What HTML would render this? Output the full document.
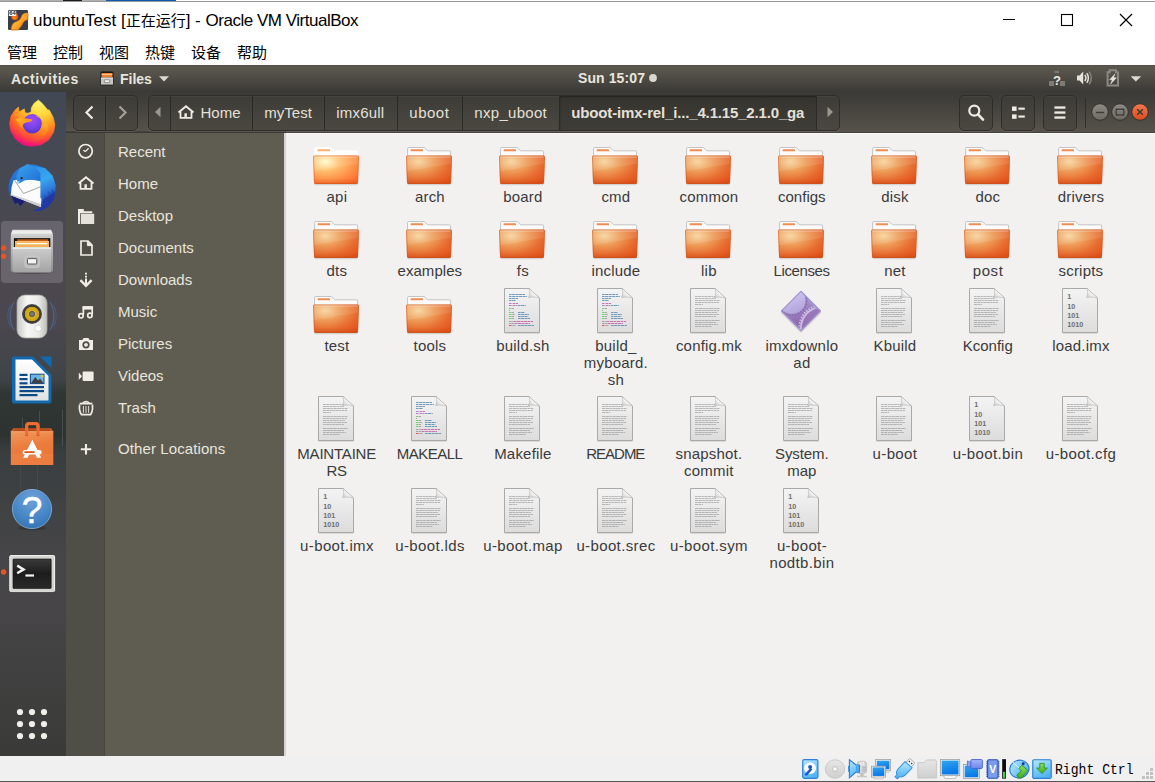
<!DOCTYPE html>
<html lang="zh"><head><meta charset="utf-8"><title>ubuntuTest - Oracle VM VirtualBox</title>
<style>
html,body{margin:0;padding:0}
body{width:1155px;height:782px;position:relative;overflow:hidden;background:#fff;font-family:"Liberation Sans","Noto Sans CJK SC",sans-serif;}
.abs{position:absolute}
svg{position:absolute;overflow:visible}
/* top strip */
#strip0{left:0;top:0;width:1155px;height:1px;background:linear-gradient(90deg,#aeb2b5 0,#aeb2b5 63px,#1c1c1c 63px,#1c1c1c 82px,#aeb2b5 82px,#aeb2b5 106px,#fff 106px)}
#strip0b{left:106px;top:0;width:70px;height:1px;background:#0b5cad}
#strip1{left:0;top:1px;width:1155px;height:1px;background:#979797}
/* VirtualBox title */
#vbtitle{left:0;top:2px;width:1155px;height:38px;background:#fff}
#vbtitle .t{left:33px;top:9px;font-size:17px;line-height:20px;color:#000;white-space:nowrap}
#vbtitle .cj{font-size:15px}
#vbmenu{left:0;top:40px;width:1155px;height:25px;background:#fff}
#vbmenu span{position:absolute;top:3px;font-size:15px;line-height:20px;color:#000;white-space:nowrap}
/* ubuntu panel */
#panel{left:0;top:65px;width:1155px;height:27px;background:linear-gradient(#4c4a43 0px,#5a574f 1px,#55524a 8px,#4c4a43 14px,#44423d 20px,#3c3b37 26px,#3b3a36 27px)}
#panel .b{position:absolute;font-weight:bold;font-size:14px;line-height:18px;color:#e9e6df;white-space:nowrap;top:5px}
/* header bar */
#hb{left:66px;top:92px;width:1089px;height:40px;background:linear-gradient(#3b3a36 0%,#44423d 35%,#4e4b45 70%,#57534b 100%);}
#hbline{left:66px;top:132px;width:1089px;height:1px;background:#45433d}
#cline{left:286px;top:133px;width:869px;height:1px;background:#fbfaf9;z-index:2}
.btn{position:absolute;box-sizing:border-box;border:1px solid #2e2d29;border-radius:5px;background:linear-gradient(#3d3c37,#4a4841);box-shadow:0 1px 0 rgba(255,255,255,.10), inset 0 1px 0 rgba(255,255,255,.04)}
.ptxt{position:absolute;top:103px;font-size:15px;line-height:20px;color:#e4e0d8;white-space:nowrap}
/* dock */
#dock{left:0;top:92px;width:66px;height:664px;background:linear-gradient(#414955 0px,#454953 60px,#4a4850 140px,#4c474e 225px,#44464b 262px,#3e4245 293px,#3c4042 353px,#3e4142 400px,#464547 465px,#474547 520px,#434243 560px,#3e3e3d 610px,#3a3a38 664px)}
/* sidebar */
#sbi{left:66px;top:133px;width:39px;height:623px;background:#4f4e47;box-shadow:inset -1px 0 0 #48473f}
#sbm{left:105px;top:133px;width:179px;height:623px;background:#5f5d51}
#sbsep{left:284px;top:133px;width:2px;height:623px;background:#d6d4d0}
.sl{position:absolute;left:118px;font-size:15px;line-height:20px;color:#e8e5de;white-space:nowrap}
/* content */
#content{left:286px;top:133px;width:869px;height:623px;background:#f2f1f0}
.lbl{position:absolute;width:120px;text-align:center;font-size:15px;line-height:17px;color:#3a3a3a;white-space:nowrap}
/* status */
#vbstatus{left:0;top:756px;width:1155px;height:25px;background:#f0f0f0}
#vbbot{left:0;top:781px;width:1155px;height:1px;background:#555}
#rctrl{left:1055px;top:763px;transform:scaleY(1.12);transform-origin:0 80%;font-family:"Liberation Mono",monospace;font-size:13.1px;line-height:16px;color:#000;white-space:nowrap}

</style></head>
<body>
<div class="abs" id="strip0"></div><div class="abs" id="strip0b"></div><div class="abs" id="strip1"></div>
<div class="abs" id="vbtitle">
<svg style="left:8px;top:8px" width="20" height="20" viewBox="0 0 20 20">
<defs><linearGradient id="vbg" x1="0" y1="0" x2="1" y2="1"><stop offset="0" stop-color="#ffd968"/><stop offset="0.55" stop-color="#fba428"/><stop offset="1" stop-color="#e87a12"/></linearGradient>
<radialGradient id="vbb" cx="0.45" cy="0.7" r="0.7"><stop offset="0" stop-color="#ff8a1c"/><stop offset="1" stop-color="#d8400c"/></radialGradient></defs>
<rect x="0" y="0" width="20" height="20" rx="1.2" fill="#393d49"/>
<path d="M3 20 C3.4 15 5 12.4 8.6 11.4 C12 10.4 12.8 8 13.8 5.6 C14.8 3.4 17.4 2.8 20 2.8 L20 9.8 C17 10.2 15.6 11.6 14.6 14 C13.6 16.8 11 18 10.6 20 Z" fill="url(#vbg)" stroke="#b8560c" stroke-width="0.6"/>
<circle cx="6.8" cy="6.4" r="3.5" fill="url(#vbb)"/>
<rect x="0.8" y="0.8" width="7.4" height="5.2" fill="#f4f4f6"/>
<text x="1.3" y="5.2" font-size="5" font-weight="bold" font-family="Liberation Sans, sans-serif" fill="#2a2a30" textLength="6.4" lengthAdjust="spacingAndGlyphs">64</text>
</svg>
<div class="abs t">ubuntuTest [<span class="cj">正在运行</span>] - <span style="letter-spacing:-0.48px">Oracle VM VirtualBox</span></div>
<svg style="left:1000px;top:0" width="150" height="38" viewBox="0 0 150 38">
<path d="M3 17.5 H15" stroke="#000" stroke-width="1"/>
<rect x="61.5" y="12.5" width="11" height="11" fill="none" stroke="#000" stroke-width="1.1"/>
<path d="M120 12 L132 24 M132 12 L120 24" stroke="#000" stroke-width="1.15"/>
</svg>
</div>
<div class="abs" id="vbmenu"><span style="left:7px">管理</span><span style="left:53px">控制</span><span style="left:99px">视图</span><span style="left:145px">热键</span><span style="left:191px">设备</span><span style="left:237px">帮助</span></div>
<div class="abs" id="panel">
<span class="b" style="left:11px;letter-spacing:0.55px">Activities</span>
<svg style="left:100px;top:6px" width="14" height="15" viewBox="0 0 14 15">
<rect x="0.3" y="0.3" width="13.4" height="14.4" rx="1.6" fill="#2a2926"/>
<rect x="1" y="0.9" width="12" height="5.6" rx="0.8" fill="#1c1b19"/>
<rect x="1.6" y="2" width="10.8" height="4.2" fill="#ee7e2e"/>
<rect x="1.6" y="2.9" width="10.8" height="1" fill="#ffc98e"/>
<rect x="1" y="6.6" width="12" height="7" fill="#c4c4c0"/>
<rect x="1" y="6.6" width="12" height="1" fill="#e8e8e6"/>
<rect x="4.4" y="8.8" width="5.2" height="2.8" rx="0.6" fill="#f6f6f4" stroke="#7c7b75" stroke-width="0.8"/>
</svg>
<span class="b" style="left:120px">Files</span>
<svg style="left:159px;top:11px" width="10" height="6" viewBox="0 0 10 6"><path d="M0 0.3 H10 L5 5.6 Z" fill="#dcd9d1"/></svg>
<span class="b" id="clock" style="left:578px;top:4px;letter-spacing:0.1px">Sun 15:07</span>
<svg style="left:649px;top:9px" width="8" height="8" viewBox="0 0 8 8"><circle cx="4" cy="4" r="3.9" fill="#d8d6d0"/></svg>
<svg style="left:1049px;top:5px" width="17" height="17" viewBox="0 0 17 17">
<rect x="0" y="11" width="5" height="5" fill="#7d7b75"/>
<rect x="11" y="11" width="5" height="5" fill="#7d7b75"/>
<rect x="5.5" y="0.8" width="4.5" height="2.2" fill="#7d7b75"/>
<text x="8" y="14.6" text-anchor="middle" font-family="Liberation Sans, sans-serif" font-weight="bold" font-size="13" fill="#eeebe4">?</text>
</svg>
<svg style="left:1076px;top:5px" width="17" height="17" viewBox="0 0 17 17">
<path d="M1 5.5 H3.6 L7.2 1.6 V14.4 L3.6 10.5 H1 Z" fill="#e6e3dc"/>
<path d="M8.8 5 C10 6.6 10 9.4 8.8 11" stroke="#e6e3dc" stroke-width="1.5" fill="none"/>
<path d="M10.8 3.2 C12.9 5.8 12.9 10.2 10.8 12.8" stroke="#e6e3dc" stroke-width="1.5" fill="none"/>
<path d="M13 1.6 C16 5.2 16 10.8 13 14.4" stroke="#8a8780" stroke-width="1.4" fill="none"/>
</svg>
<svg style="left:1106px;top:4px" width="14" height="18" viewBox="0 0 14 18">
<path d="M1.6 3.2 H3.6 V1.2 H10 V3.2 H12 V16.6 H1.6 Z" fill="none" stroke="#8b8982" stroke-width="2"/>
<path d="M9 5 L3.6 10.8 H6.4 L4.6 15 L10.4 8.8 H7.4 Z" fill="#ebe8e1" stroke="#ebe8e1" stroke-width="0.5"/>
</svg>
<svg style="left:1130px;top:11px" width="12" height="6" viewBox="0 0 12 6"><path d="M0.6 0.2 H11.2 L5.9 5.4 Z" fill="#dcd9d1"/></svg>
</div>
<div class="abs" id="dock"></div>
<div class="abs" style="left:0;top:380px;width:66px;height:75px;background:linear-gradient(rgba(36,44,38,0) 0,rgba(36,44,38,.55) 14px,rgba(34,42,36,.6) 55px,rgba(36,44,38,0) 75px)"></div>
<div class="abs" style="left:0;top:445px;width:66px;height:60px;background:linear-gradient(rgba(52,58,58,.35),rgba(52,58,58,0))"></div>
<div class="abs" style="left:22px;top:418px;width:1px;height:28px;background:rgba(200,205,205,.16)"></div><div class="abs" style="left:39px;top:411px;width:1px;height:35px;background:rgba(200,205,205,.16)"></div><div class="abs" style="left:62px;top:410px;width:1px;height:36px;background:rgba(200,205,205,.16)"></div><div class="abs" style="left:20px;top:466px;width:1px;height:40px;background:rgba(200,205,205,.07)"></div><div class="abs" style="left:37px;top:466px;width:1px;height:40px;background:rgba(200,205,205,.07)"></div>
<div class="abs" style="left:1px;top:221px;width:62px;height:62px;border-radius:4px;background:rgba(255,246,255,.17)"></div>
<svg style="left:0;top:240px" width="8" height="24" viewBox="0 0 8 24"><circle cx="3.6" cy="8" r="2.7" fill="#e95420"/><circle cx="3.6" cy="16.2" r="2.7" fill="#e95420"/></svg>
<svg style="left:0;top:566px" width="8" height="12" viewBox="0 0 8 12"><circle cx="3.6" cy="6" r="2.7" fill="#e95420"/></svg>
<svg style="left:9px;top:99px" width="46" height="48" viewBox="0 0 46 48">
<defs>
<radialGradient id="ff1" gradientUnits="userSpaceOnUse" cx="31" cy="3" r="49"><stop offset="0" stop-color="#fff56e"/><stop offset="0.26" stop-color="#ffd83c"/><stop offset="0.48" stop-color="#ffa022"/><stop offset="0.68" stop-color="#ff6426"/><stop offset="0.8" stop-color="#fc3a44"/><stop offset="0.9" stop-color="#f2127a"/><stop offset="1" stop-color="#e3108a"/></radialGradient>
<radialGradient id="ff2" cx="0.5" cy="0.3" r="0.8"><stop offset="0" stop-color="#a04cff"/><stop offset="0.55" stop-color="#7542e5"/><stop offset="1" stop-color="#4a2cc0"/></radialGradient>
<linearGradient id="ff3" x1="0" y1="0" x2="1" y2="0.6"><stop offset="0" stop-color="#ffb52a"/><stop offset="1" stop-color="#ff8a1c"/></linearGradient>
<linearGradient id="ff4" x1="0.8" y1="0" x2="0.3" y2="1"><stop offset="0" stop-color="#ffd43c" stop-opacity="0.9"/><stop offset="0.5" stop-color="#ff8a1f" stop-opacity="0.7"/><stop offset="1" stop-color="#ff3a4a" stop-opacity="0.5"/></linearGradient>
</defs>
<path d="M29.45 1.14 L32.91 4.21 L35.98 7.66 L39.05 11.50 L39.97 10.73 L42.12 14.57 L44.27 18.79 L45.80 25.70 L44.57 33.37 L39.82 40.66 L32.14 45.65 L22.93 47.34 L14.11 45.65 L6.66 40.28 L1.83 31.84 L0.67 24.16 L2.21 16.87 L6.05 11.12 L9.50 8.20 L10.04 13.04 L15.26 9.97 L16.02 14.03 L19.48 14.19 L22.16 13.11 L22.47 8.81 L25.23 4.21 Z" fill="url(#ff1)" stroke="url(#ff1)" stroke-width="0.8" stroke-linejoin="round"/>
<circle cx="23.31" cy="24.78" r="9.7" fill="url(#ff2)"/>
<path d="M13.11 29.54 C13.94 29.92 14.39 32.45 16.02 33.37 C17.66 34.29 20.76 35.13 22.93 35.06 C25.11 35.00 27.51 34.29 29.07 32.99 C30.63 31.68 31.85 29.22 32.29 27.23 C32.74 25.25 32.29 22.76 31.76 21.09 C31.22 19.43 29.90 17.96 29.07 17.26 C28.24 16.55 26.38 16.36 26.77 16.87 C27.15 17.38 30.35 18.86 31.37 20.33 C32.40 21.80 32.14 25.06 32.91 25.70 C33.68 26.34 34.95 23.91 35.98 24.16 C37.00 24.42 38.73 25.70 39.05 27.23 C39.37 28.77 38.92 31.33 37.90 33.37 C36.87 35.42 35.02 38.04 32.91 39.51 C30.80 40.98 27.79 41.94 25.23 42.20 C22.68 42.45 19.73 42.01 17.56 41.05 C15.38 40.09 13.27 38.11 12.19 36.44 C11.10 34.78 10.88 32.22 11.04 31.07 C11.19 29.92 12.28 29.15 13.11 29.54 Z" fill="url(#ff4)"/>
<path d="M6.81 20.71 C7.26 20.03 9.63 19.16 11.42 18.94 C13.21 18.73 15.61 19.15 17.56 19.41 C19.50 19.66 22.47 19.92 23.08 20.48 C23.70 21.04 22.42 22.19 21.24 22.78 C20.07 23.37 17.30 23.40 16.02 24.01 C14.74 24.62 14.05 25.54 13.57 26.47 C13.08 27.39 13.53 29.54 13.11 29.54 C12.69 29.54 11.76 27.55 11.04 26.47 C10.31 25.38 9.44 23.97 8.73 23.01 C8.03 22.05 6.37 21.39 6.81 20.71 Z" fill="url(#ff3)"/>
</svg>
<svg style="left:7px;top:163px" width="50" height="50" viewBox="0 0 50 50">
<defs>
<radialGradient id="tb1" cx="0.4" cy="0.2" r="0.95"><stop offset="0" stop-color="#2f8ce4"/><stop offset="0.55" stop-color="#2060c8"/><stop offset="1" stop-color="#1a3a9c"/></radialGradient>
<linearGradient id="tb2" x1="0" y1="0" x2="1" y2="1"><stop offset="0" stop-color="#3aa4ee"/><stop offset="1" stop-color="#1f6ed4"/></linearGradient>
<linearGradient id="tb3" x1="0" y1="0" x2="0.3" y2="1"><stop offset="0" stop-color="#2f94ea"/><stop offset="0.5" stop-color="#37a6f0"/><stop offset="1" stop-color="#2a62cc"/></linearGradient>
</defs>
<path d="M25.9 48.7 A23.6 23.6 0 1 0 2.7 32.8 L3.8 32.2 L33.8 44.1 Z" fill="url(#tb1)"/>
<path d="M4.2 32.6 L18.0 38.0 L13.4 43.3 L11.1 39.5 L8.0 41.0 Z" fill="#1a1f74"/>
<path d="M6.5 17.3 L18.0 15.7 L33.4 18.0 L35.3 25.7 L33.8 44.1 L3.8 32.2 L4.6 24.2 Z" fill="#fbfbfb"/>
<path d="M3.8 31.1 L33.8 41.0 L33.8 44.1 L3.8 32.2 Z" fill="#cfcfcf"/>
<path d="M7.7 17.4 L16.5 30.5 L34.3 23.5" fill="none" stroke="#8e8e8e" stroke-width="0.8"/>
<path d="M28.0 3.4 L38.0 5.0 L45.7 12.7 L48.7 22.6 L48.0 28.8 L44.9 25.7 L44.1 30.3 L41.0 28.0 L40.3 33.4 L37.2 31.1 L36.4 36.4 L33.4 34.9 L33.4 18.0 Z" fill="url(#tb3)"/>
<path d="M48.0 28.8 L47.2 36.4 L41.0 44.1 L33.4 48.0 L25.7 48.0 L34.9 44.1 L36.4 36.4 Z" fill="#2338a4"/>
<path d="M9.6 13.0 L12.7 5.7 L20.3 1.0 L28.0 3.4 L33.4 10.3 L33.4 18.0 L27.2 16.5 L18.0 17.3 L12.7 20.3 L10.3 20.3 Z" fill="url(#tb2)"/>
<circle cx="14.6" cy="15.1" r="1.2" fill="#3a2414"/>
<path d="M9.6 18.0 L13.0 18.4 L10.7 21.5 Z" fill="#a8dcea"/>
</svg>
<svg style="left:10px;top:229px" width="44" height="46" viewBox="0 0 44 46">
<defs><linearGradient id="fc0" x1="0" y1="0" x2="0" y2="1"><stop offset="0" stop-color="#d6d6d6"/><stop offset="0.5" stop-color="#f2f2f2"/><stop offset="1" stop-color="#dcdcdc"/></linearGradient>
<linearGradient id="fc1" x1="0" y1="0" x2="0" y2="1"><stop offset="0" stop-color="#cfcfcf"/><stop offset="1" stop-color="#8e8e8e"/></linearGradient>
<linearGradient id="fc2" x1="0" y1="0" x2="0" y2="1"><stop offset="0" stop-color="#cdcdcd"/><stop offset="1" stop-color="#a3a3a3"/></linearGradient></defs>
<ellipse cx="22" cy="43.6" rx="20" ry="1.6" fill="#000" opacity="0.18"/>
<rect x="0.8" y="5" width="42.2" height="37.4" rx="1" fill="url(#fc1)"/>
<path d="M2.4 0.7 H41.1 L43 5.3 H0.8 Z" fill="url(#fc0)"/>
<rect x="3.9" y="9.1" width="36.4" height="9.6" fill="#1a1917"/>
<rect x="7.2" y="10.3" width="31" height="3" fill="#c85a14"/>
<rect x="5" y="12.2" width="34" height="6.4" fill="#f4b258"/>
<rect x="5" y="12.2" width="34" height="1" fill="#f8c47a"/>
<rect x="6.8" y="14" width="30.4" height="1.3" fill="#fffaf0"/>
<rect x="2.7" y="18.3" width="38.4" height="25.3" rx="0.8" fill="url(#fc2)"/>
<rect x="2.7" y="18.3" width="38.4" height="1.5" fill="#f2f2f2"/>
<rect x="15" y="27.1" width="14.2" height="11.2" rx="2.2" fill="#bcbcbc" stroke="#d2d2d2" stroke-width="0.8"/>
<rect x="17.5" y="29.6" width="9.2" height="5.4" rx="0.7" fill="#f4f4f4" stroke="#4a4a4a" stroke-width="0.9"/>
</svg>
<svg style="left:4px;top:290px" width="56" height="52" viewBox="0 0 56 52">
<defs><linearGradient id="rb1" x1="0" y1="0" x2="1" y2="0"><stop offset="0" stop-color="#c9c9c6"/><stop offset="0.35" stop-color="#f6f6f4"/><stop offset="0.7" stop-color="#ecece9"/><stop offset="1" stop-color="#bdbdb9"/></linearGradient>
<radialGradient id="rb2" cx="0.5" cy="0.5" r="0.5"><stop offset="0" stop-color="#8a8a8a"/><stop offset="0.28" stop-color="#5a5a5a"/><stop offset="0.32" stop-color="#d9b51e"/><stop offset="0.7" stop-color="#c9a010"/><stop offset="0.76" stop-color="#333333"/><stop offset="1" stop-color="#505050"/></radialGradient></defs>
<path d="M10 12 C5 20 5 32 10 40" fill="none" stroke="#4f78b8" stroke-width="1.4" opacity="0.55"/>
<path d="M6.5 15 C3 22 3 30 6.5 37" fill="none" stroke="#4f78b8" stroke-width="1.2" opacity="0.35"/>
<path d="M46 12 C51 20 51 32 46 40" fill="none" stroke="#4f78b8" stroke-width="1.4" opacity="0.55"/>
<path d="M49.5 15 C53 22 53 30 49.5 37" fill="none" stroke="#4f78b8" stroke-width="1.2" opacity="0.35"/>
<rect x="13" y="5" width="30" height="43" rx="8" fill="url(#rb1)" stroke="#a5a5a2" stroke-width="0.8"/>
<circle cx="28" cy="24" r="10" fill="url(#rb2)"/>
<circle cx="34" cy="38.4" r="3.3" fill="#fbfbfb" stroke="#c4c4c2" stroke-width="0.6"/>
</svg>
<svg style="left:11px;top:355px" width="42" height="50" viewBox="0 0 42 50">
<defs><linearGradient id="lw1" x1="0" y1="0" x2="0" y2="1"><stop offset="0" stop-color="#ffffff"/><stop offset="1" stop-color="#e2e2e2"/></linearGradient></defs>
<path d="M3 1.5 H22 L40.5 20 V46.5 Q40.5 48.5 38.5 48.5 H3 Q1 48.5 1 46.5 V3.5 Q1 1.5 3 1.5 Z" fill="#1269ad"/>
<path d="M4.5 4.5 H21 L37.5 21 V45.5 H4.5 Z" fill="url(#lw1)"/>
<path d="M29 1.5 H40.5 V13 Z" fill="#1269ad"/>
<rect x="8.5" y="18.8" width="8" height="2.2" fill="#0c4a85"/><rect x="8.5" y="23.0" width="8" height="2.2" fill="#0c4a85"/><rect x="8.5" y="27.2" width="8" height="2.2" fill="#0c4a85"/><rect x="8.5" y="31.0" width="24.5" height="2.2" fill="#0c4a85"/><rect x="8.5" y="35.0" width="24.5" height="2.2" fill="#0c4a85"/><rect x="8.5" y="39.0" width="18.0" height="2.2" fill="#0c4a85"/>
<rect x="19.4" y="19.2" width="13.6" height="9.4" fill="#6ab4e6" stroke="#0c4a85" stroke-width="1"/>
<path d="M20 28.2 L24.2 22 L27 25.6 L29.2 23.8 L32.5 28.2 Z" fill="#3f3f3f"/>
<rect x="29.8" y="19.8" width="2.7" height="2.6" fill="#e8c030"/>
</svg>
<svg style="left:10px;top:421px" width="44" height="45" viewBox="0 0 44 45">
<defs><linearGradient id="us1" x1="0" y1="0" x2="0.25" y2="1"><stop offset="0" stop-color="#f09a60"/><stop offset="0.5" stop-color="#ec7d3e"/><stop offset="1" stop-color="#ea7434"/></linearGradient></defs>
<path d="M16.6 10 V5.4 Q16.6 2.6 19.4 2.6 H25.2 Q28 2.6 28 5.4 V10" fill="none" stroke="#d9601f" stroke-width="3.2"/>
<path d="M3.1 7.2 H41.1 L43.3 10.6 H0.8 Z" fill="#cf5a22"/>
<path d="M4.4 8.2 H39.8 L41.2 10.6 H3 Z" fill="#b84a16"/>
<rect x="0.8" y="10.3" width="42.5" height="33.7" fill="url(#us1)"/>
<rect x="0.8" y="33" width="42.5" height="11" fill="#fff" opacity="0.06"/>
<rect x="0.8" y="10.3" width="42.5" height="0.9" fill="#f6b080" opacity="0.8"/>
<path d="M16.6 5.4 Q16.6 2.6 19.4 2.6 H25.2 Q28 2.6 28 5.4 V14.4" fill="none" stroke="#ea6e30" stroke-width="3"/>
<path d="M16.6 5.4 V14.4" fill="none" stroke="#ea6e30" stroke-width="3"/>
<path d="M15.1 14.6 H18.1 M26.5 14.6 H29.5" stroke="#c9521a" stroke-width="0.8"/>
<path d="M22.3 19 L13.1 36.8 H17.6 L22.3 27 L27 36.8 H31.2 Z" fill="#fff"/>
<path d="M22.3 19 L17.4 29 H27.2 Z" fill="#fff"/>
<rect x="12.6" y="28.9" width="19" height="4.5" rx="2.25" fill="#fff"/>
<rect x="14.3" y="30.2" width="10.4" height="1.9" rx="0.9" fill="#e2500f"/>
</svg>
<svg style="left:11px;top:488px" width="42" height="44" viewBox="0 0 42 44">
<defs><radialGradient id="hp1" cx="0.5" cy="0.25" r="0.85"><stop offset="0" stop-color="#6ea2da"/><stop offset="0.6" stop-color="#4585c4"/><stop offset="1" stop-color="#2f6eac"/></radialGradient></defs>
<ellipse cx="21" cy="40" rx="14" ry="2.4" fill="#000" opacity="0.18"/>
<circle cx="21" cy="21" r="19.6" fill="url(#hp1)" stroke="#86b4e2" stroke-width="0.8"/>
<text x="21" y="34.8" text-anchor="middle" font-family="Liberation Sans, sans-serif" font-size="37" fill="#ffffff" stroke="#ffffff" stroke-width="0.5">?</text>
</svg>
<svg style="left:9px;top:555px" width="47" height="39" viewBox="0 0 47 39">
<defs><linearGradient id="tm1" x1="0" y1="0" x2="0" y2="1"><stop offset="0" stop-color="#3a3a3a"/><stop offset="0.5" stop-color="#1c1c1c"/><stop offset="1" stop-color="#2a2a2a"/></linearGradient></defs>
<rect x="0.8" y="0.6" width="44.8" height="36" rx="1" fill="#d4d4d2" stroke="#f6f6f4" stroke-width="1"/><rect x="0.3" y="36.6" width="45.8" height="1" fill="#000" opacity="0.18"/>
<rect x="4" y="4" width="38.2" height="29.4" rx="0.6" fill="url(#tm1)" stroke="#0a0a0a" stroke-width="0.6"/>
<path d="M8.2 10.6 L14.6 14.4 L8.2 18.2" fill="none" stroke="#f2f2f2" stroke-width="2.4"/>
<rect x="16.4" y="19.4" width="8.6" height="2.2" fill="#f2f2f2"/>
</svg>
<svg style="left:12px;top:704px" width="40" height="40" viewBox="0 0 40 40"><circle cx="8.0" cy="8.0" r="3.1" fill="#f1efea"/><circle cx="8.0" cy="20.0" r="3.1" fill="#f1efea"/><circle cx="8.0" cy="32.0" r="3.1" fill="#f1efea"/><circle cx="20.0" cy="8.0" r="3.1" fill="#f1efea"/><circle cx="20.0" cy="20.0" r="3.1" fill="#f1efea"/><circle cx="20.0" cy="32.0" r="3.1" fill="#f1efea"/><circle cx="32.0" cy="8.0" r="3.1" fill="#f1efea"/><circle cx="32.0" cy="20.0" r="3.1" fill="#f1efea"/><circle cx="32.0" cy="32.0" r="3.1" fill="#f1efea"/></svg>
<div class="abs" id="hb"></div><div class="abs" id="hbline"></div><div class="abs" id="cline"></div><div class="abs" style="left:66px;top:131px;width:220px;height:2px;background:linear-gradient(#4a4841,#34332f)"></div>
<div class="btn" style="left:73px;top:95px;width:65px;height:36px"></div>
<div class="abs" style="left:105px;top:96px;width:1px;height:34px;background:#2b2a27"></div>
<svg style="left:73px;top:95px" width="65" height="36" viewBox="0 0 65 36"><path d="M19.5 11.5 L13.5 17.5 L19.5 23.5" fill="none" stroke="#eeebe4" stroke-width="2.2"/><path d="M46.5 11.5 L52.5 17.5 L46.5 23.5" fill="none" stroke="#a39f97" stroke-width="2.2"/></svg>
<div class="btn" style="left:148px;top:95px;width:692px;height:36px"></div>
<div class="abs" style="left:560px;top:96px;width:257px;height:34px;background:linear-gradient(#35342f,#3e3d37);box-shadow:inset 0 1px 2px rgba(0,0,0,.35)"></div>
<div class="abs" style="left:170px;top:96px;width:1px;height:34px;background:#2b2a27"></div><div class="abs" style="left:252px;top:96px;width:1px;height:34px;background:#2b2a27"></div><div class="abs" style="left:324px;top:96px;width:1px;height:34px;background:#2b2a27"></div><div class="abs" style="left:397px;top:96px;width:1px;height:34px;background:#2b2a27"></div><div class="abs" style="left:462px;top:96px;width:1px;height:34px;background:#2b2a27"></div><div class="abs" style="left:559px;top:96px;width:1px;height:34px;background:#2b2a27"></div><div class="abs" style="left:816px;top:96px;width:1px;height:34px;background:#2b2a27"></div>
<svg style="left:154px;top:106px" width="8" height="12" viewBox="0 0 8 12"><path d="M6.5 0.8 V11.2 L1 6 Z" fill="#9b978f"/></svg>
<svg style="left:826px;top:106px" width="8" height="12" viewBox="0 0 8 12"><path d="M1.5 0.8 V11.2 L7 6 Z" fill="#9b978f"/></svg>
<svg style="left:178px;top:104px" width="16" height="16" viewBox="0 0 16 16"><path d="M0.5 8.6 L8 2.2 L15.5 8.6" fill="none" stroke="#eeebe4" stroke-width="2"/><path d="M2.5 7.6 V13.8 H13.5 V7.6" fill="none" stroke="#eeebe4" stroke-width="1.8"/><rect x="6.4" y="9.3" width="2.5" height="4.6" fill="#eeebe4"/></svg>
<span class="ptxt" style="left:200.5px;">Home</span><span class="ptxt" style="left:264.3px;">myTest</span><span class="ptxt" style="left:336.3px;letter-spacing:0.2px;">imx6ull</span><span class="ptxt" style="left:409.3px;letter-spacing:0.5px;">uboot</span><span class="ptxt" style="left:474.3px;letter-spacing:0.3px;">nxp_uboot</span><span class="ptxt" style="left:571.3px;font-weight:bold;letter-spacing:-0.16px;">uboot-imx-rel_i..._4.1.15_2.1.0_ga</span>
<div class="btn" style="left:959px;top:95px;width:34px;height:36px"></div><div class="btn" style="left:1001px;top:95px;width:34px;height:36px"></div><div class="btn" style="left:1043px;top:95px;width:34px;height:36px"></div>
<svg style="left:959px;top:95px" width="34" height="36" viewBox="0 0 34 36"><circle cx="15.3" cy="15.6" r="5" fill="none" stroke="#eeebe4" stroke-width="2.2"/><path d="M19 19.4 L24 24.6" stroke="#eeebe4" stroke-width="2.6" stroke-linecap="round"/></svg>
<svg style="left:1001px;top:95px" width="34" height="36" viewBox="0 0 34 36"><rect x="11" y="11.5" width="4.6" height="4.4" fill="#eeebe4"/><rect x="11" y="19.4" width="4.6" height="4.4" fill="#eeebe4"/><rect x="17.4" y="12.6" width="6.4" height="2.1" fill="#eeebe4"/><rect x="17.4" y="20.5" width="6.4" height="2.1" fill="#eeebe4"/></svg>
<svg style="left:1043px;top:95px" width="34" height="36" viewBox="0 0 34 36"><rect x="11.4" y="11.4" width="11" height="2.3" fill="#eeebe4"/><rect x="11.4" y="16.4" width="11" height="2.3" fill="#eeebe4"/><rect x="11.4" y="21.4" width="11" height="2.3" fill="#eeebe4"/></svg>
<div class="abs" style="left:1085px;top:98px;width:1px;height:30px;background:#2f2e2a"></div>
<svg style="left:1088px;top:100px" width="64" height="24" viewBox="0 0 64 24">
<defs><linearGradient id="gb" x1="0" y1="0" x2="0" y2="1"><stop offset="0" stop-color="#8d8b84"/><stop offset="1" stop-color="#6b6962"/></linearGradient>
<linearGradient id="gc" x1="0" y1="0" x2="0" y2="1"><stop offset="0" stop-color="#f3794d"/><stop offset="1" stop-color="#de4a1f"/></linearGradient></defs>
<circle cx="12" cy="12" r="8.3" fill="url(#gb)" stroke="#33322e" stroke-width="1"/>
<circle cx="32" cy="12" r="8.3" fill="url(#gb)" stroke="#33322e" stroke-width="1"/>
<circle cx="52" cy="12" r="8.3" fill="url(#gc)" stroke="#33322e" stroke-width="1"/>
<path d="M8 12.5 H16" stroke="#3c3b37" stroke-width="1.4"/>
<rect x="28.2" y="9.2" width="7.6" height="5.8" fill="none" stroke="#3c3b37" stroke-width="1.3"/>
<path d="M49.2 9.2 L54.8 14.8 M54.8 9.2 L49.2 14.8" stroke="#3c3b37" stroke-width="1.6"/>
</svg>
<div class="abs" id="sbi"></div><div class="abs" id="sbm"></div><div class="abs" id="sbsep"></div>
<span class="sl" style="top:142px">Recent</span><span class="sl" style="top:174px">Home</span><span class="sl" style="top:206px">Desktop</span><span class="sl" style="top:238px">Documents</span><span class="sl" style="top:270px">Downloads</span><span class="sl" style="top:302px">Music</span><span class="sl" style="top:334px">Pictures</span><span class="sl" style="top:366px">Videos</span><span class="sl" style="top:398px">Trash</span><span class="sl" style="top:439px;letter-spacing:0.1px">Other Locations</span>
<svg style="left:78px;top:143px" width="16" height="16" viewBox="0 0 16 16"><circle cx="7.6" cy="8.2" r="6.7" fill="none" stroke="#f0ede6" stroke-width="1.7"/><path d="M7.4 8.6 L10.6 5.2" stroke="#f0ede6" stroke-width="1.3" fill="none"/><path d="M7.6 8.6 L5.4 7.2" stroke="#f0ede6" stroke-width="1.3" fill="none"/></svg>
<svg style="left:78px;top:175px" width="16" height="16" viewBox="0 0 16 16"><path d="M0.5 8.6 L8 2.2 L15.5 8.6" fill="none" stroke="#f0ede6" stroke-width="2" stroke-linejoin="miter"/><path d="M2.5 7.6 V13.8 H13.5 V7.6" fill="none" stroke="#f0ede6" stroke-width="1.8"/><rect x="6.4" y="9.3" width="2.5" height="4.6" fill="#f0ede6"/></svg>
<svg style="left:78px;top:208px" width="16" height="16" viewBox="0 0 16 16"><path d="M0 1 H5.8 V3.2 H14.3 V5.2 H2.1 V16 H0 Z" fill="#f0ede6"/><rect x="2.9" y="5.8" width="13.3" height="10.2" fill="#e4e1da"/></svg>
<svg style="left:78px;top:240px" width="16" height="16" viewBox="0 0 16 16"><path d="M3 1 H10 L14 5 V15 H3 Z" fill="none" stroke="#f0ede6" stroke-width="1.7"/><path d="M9.4 1 V5.6 H14" fill="#f0ede6" stroke="#f0ede6" stroke-width="1"/></svg>
<svg style="left:78px;top:272px" width="16" height="16" viewBox="0 0 16 16"><path d="M8 0.8 V2.4 M8 3.8 V5.4" stroke="#f0ede6" stroke-width="2"/><path d="M8 6.6 V12.6" stroke="#f0ede6" stroke-width="2"/><path d="M2.4 8.2 L8 13.8 L13.6 8.2" fill="none" stroke="#f0ede6" stroke-width="2.4"/></svg>
<svg style="left:78px;top:304px" width="16" height="16" viewBox="0 0 16 16"><path d="M5.4 10.6 V3 H14.2 V10.2" fill="none" stroke="#f0ede6" stroke-width="1.7"/><rect x="4.6" y="2.2" width="10.4" height="3.4" fill="#f0ede6"/><circle cx="3" cy="11.8" r="2.2" fill="none" stroke="#f0ede6" stroke-width="1.7"/><circle cx="11.9" cy="11.4" r="2.2" fill="none" stroke="#f0ede6" stroke-width="1.7"/></svg>
<svg style="left:78px;top:336px" width="16" height="16" viewBox="0 0 16 16"><path d="M1 4 H4.4 L5.6 2 H10.4 L11.6 4 H15 V14 H1 Z" fill="#f0ede6"/><circle cx="8" cy="8.8" r="3.6" fill="#4c4b44"/><circle cx="8" cy="8.8" r="1.9" fill="#f0ede6"/></svg>
<svg style="left:78px;top:368px" width="16" height="16" viewBox="0 0 16 16"><rect x="4.6" y="3.4" width="11" height="9.6" rx="1" fill="#f0ede6"/><path d="M0.8 4.4 L4 8.2 L0.8 12 Z" fill="#f0ede6"/></svg>
<svg style="left:78px;top:400px" width="16" height="16" viewBox="0 0 16 16"><path d="M1.6 3.6 H14.4" stroke="#f0ede6" stroke-width="1.8" fill="none"/><path d="M4.6 3 Q8 0.2 11.4 3" stroke="#f0ede6" stroke-width="1.5" fill="none"/><path d="M1.6 4.6 C1.2 8 1.6 12 3.4 14.6 H12.6 C14.4 12 14.8 8 14.4 4.6" fill="none" stroke="#f0ede6" stroke-width="1.7"/><path d="M5.4 6 V12.8 M8 6 V12.8 M10.6 6 V12.8" stroke="#f0ede6" stroke-width="0.9"/></svg>
<svg style="left:78px;top:441px" width="16" height="16" viewBox="0 0 16 16"><path d="M8 3 V13.4 M2.8 8.2 H13.2" stroke="#f0ede6" stroke-width="2.1"/></svg>
<div class="abs" id="content"></div>
<svg width="0" height="0" style="left:0;top:0"><defs>
<radialGradient id="fg" cx="0.27" cy="0.22" r="0.95" fx="0.27" fy="0.22"><stop offset="0" stop-color="#f6d49c"/><stop offset="0.35" stop-color="#ee9c58"/><stop offset="0.7" stop-color="#e76c30"/><stop offset="1" stop-color="#e4521a"/></radialGradient>
<radialGradient id="fgh" cx="0.27" cy="0.22" r="0.95" fx="0.27" fy="0.22"><stop offset="0" stop-color="#fffccb"/><stop offset="0.35" stop-color="#ffbd6d"/><stop offset="0.7" stop-color="#ff8d45"/><stop offset="1" stop-color="#fb6a2a"/></radialGradient>
<linearGradient id="fsh" x1="0" y1="0" x2="0" y2="1"><stop offset="0" stop-color="#fff" stop-opacity="0"/><stop offset="0.8" stop-color="#c03c08" stop-opacity="0"/><stop offset="0.94" stop-color="#c03c08" stop-opacity="0.18"/><stop offset="1" stop-color="#b8380a" stop-opacity="0.7"/></linearGradient>
<linearGradient id="pg" x1="0" y1="0" x2="0" y2="1"><stop offset="0" stop-color="#f4f4f4"/><stop offset="1" stop-color="#dcdcdc"/></linearGradient>
<linearGradient id="cg" x1="0" y1="1" x2="1" y2="0"><stop offset="0" stop-color="#c4c4c4"/><stop offset="0.5" stop-color="#fafafa"/><stop offset="1" stop-color="#ffffff"/></linearGradient>
<linearGradient id="dg" x1="0.3" y1="0" x2="0.7" y2="1"><stop offset="0" stop-color="#d8d2f4"/><stop offset="0.5" stop-color="#c4baea"/><stop offset="1" stop-color="#b0a2d8"/></linearGradient>
<linearGradient id="dg2" x1="0.3" y1="0" x2="0.6" y2="1"><stop offset="0" stop-color="#b6a8dc"/><stop offset="0.5" stop-color="#9a80c0"/><stop offset="1" stop-color="#85589f"/></linearGradient>
</defs></svg>
<svg style="left:312px;top:146px" width="48" height="40" viewBox="0 0 48 40"><rect x="2.5" y="37" width="43" height="2.2" rx="1" fill="#000" opacity="0.12"/><path d="M2.6 11 V2.6 Q2.6 1.5 3.8 1.5 H19.2 L22.8 4.8 H44.4 Q45.6 4.8 45.6 6 V11 Z" fill="#ffffff" stroke="#ffffff" stroke-width="1"/><rect x="5.6" y="3.3" width="12.4" height="1.9" rx="0.5" fill="#ffb070"/><path d="M2.4 9.5 H45.6 Q47 9.5 47 11 L46 36.6 Q45.9 38 44.5 38 H3.5 Q2.1 38 2 36.6 L1 11 Q1 9.5 2.4 9.5 Z" fill="url(#fgh)"/><path d="M1 25.5 L47 17.5 V11 Q47 9.5 45.4 9.5 H2.6 Q1 9.5 1 11 Z" fill="#fff" opacity="0.10"/><path d="M2.4 9.5 H45.6 Q47 9.5 47 11 L46 36.6 Q45.9 38 44.5 38 H3.5 Q2.1 38 2 36.6 L1 11 Q1 9.5 2.4 9.5 Z" fill="url(#fsh)"/><path d="M2.6 10 H45.4 Q46.5 10 46.5 11 L45.5 36.5 Q45.4 37.5 44.4 37.5 H3.6 Q2.6 37.5 2.5 36.5 L1.5 11 Q1.5 10 2.6 10 Z" fill="none" stroke="#e8601c" stroke-width="1" opacity="0.55"/><path d="M2.4 11 H45.6" stroke="#fff" stroke-width="0.9" opacity="0.45"/></svg>
<div class="lbl" style="left:276.90px;top:188px;letter-spacing:0.20px">api</div>
<svg style="left:405px;top:146px" width="48" height="40" viewBox="0 0 48 40"><rect x="2.5" y="37" width="43" height="2.2" rx="1" fill="#000" opacity="0.12"/><path d="M2.6 11 V2.6 Q2.6 1.5 3.8 1.5 H19.2 L22.8 4.8 H44.4 Q45.6 4.8 45.6 6 V11 Z" fill="#fbfbfb" stroke="#c4c4c4" stroke-width="1"/><rect x="5.6" y="3.3" width="12.4" height="1.9" rx="0.5" fill="#ef8d52"/><path d="M2.4 9.5 H45.6 Q47 9.5 47 11 L46 36.6 Q45.9 38 44.5 38 H3.5 Q2.1 38 2 36.6 L1 11 Q1 9.5 2.4 9.5 Z" fill="url(#fg)"/><path d="M1 25.5 L47 17.5 V11 Q47 9.5 45.4 9.5 H2.6 Q1 9.5 1 11 Z" fill="#fff" opacity="0.10"/><path d="M2.4 9.5 H45.6 Q47 9.5 47 11 L46 36.6 Q45.9 38 44.5 38 H3.5 Q2.1 38 2 36.6 L1 11 Q1 9.5 2.4 9.5 Z" fill="url(#fsh)"/><path d="M2.6 10 H45.4 Q46.5 10 46.5 11 L45.5 36.5 Q45.4 37.5 44.4 37.5 H3.6 Q2.6 37.5 2.5 36.5 L1.5 11 Q1.5 10 2.6 10 Z" fill="none" stroke="#cf5a22" stroke-width="1" opacity="0.55"/><path d="M2.4 11 H45.6" stroke="#fff" stroke-width="0.9" opacity="0.45"/></svg>
<div class="lbl" style="left:369.90px;top:188px;letter-spacing:0.20px">arch</div>
<svg style="left:498px;top:146px" width="48" height="40" viewBox="0 0 48 40"><rect x="2.5" y="37" width="43" height="2.2" rx="1" fill="#000" opacity="0.12"/><path d="M2.6 11 V2.6 Q2.6 1.5 3.8 1.5 H19.2 L22.8 4.8 H44.4 Q45.6 4.8 45.6 6 V11 Z" fill="#fbfbfb" stroke="#c4c4c4" stroke-width="1"/><rect x="5.6" y="3.3" width="12.4" height="1.9" rx="0.5" fill="#ef8d52"/><path d="M2.4 9.5 H45.6 Q47 9.5 47 11 L46 36.6 Q45.9 38 44.5 38 H3.5 Q2.1 38 2 36.6 L1 11 Q1 9.5 2.4 9.5 Z" fill="url(#fg)"/><path d="M1 25.5 L47 17.5 V11 Q47 9.5 45.4 9.5 H2.6 Q1 9.5 1 11 Z" fill="#fff" opacity="0.10"/><path d="M2.4 9.5 H45.6 Q47 9.5 47 11 L46 36.6 Q45.9 38 44.5 38 H3.5 Q2.1 38 2 36.6 L1 11 Q1 9.5 2.4 9.5 Z" fill="url(#fsh)"/><path d="M2.6 10 H45.4 Q46.5 10 46.5 11 L45.5 36.5 Q45.4 37.5 44.4 37.5 H3.6 Q2.6 37.5 2.5 36.5 L1.5 11 Q1.5 10 2.6 10 Z" fill="none" stroke="#cf5a22" stroke-width="1" opacity="0.55"/><path d="M2.4 11 H45.6" stroke="#fff" stroke-width="0.9" opacity="0.45"/></svg>
<div class="lbl" style="left:462.90px;top:188px;letter-spacing:0.20px">board</div>
<svg style="left:591px;top:146px" width="48" height="40" viewBox="0 0 48 40"><rect x="2.5" y="37" width="43" height="2.2" rx="1" fill="#000" opacity="0.12"/><path d="M2.6 11 V2.6 Q2.6 1.5 3.8 1.5 H19.2 L22.8 4.8 H44.4 Q45.6 4.8 45.6 6 V11 Z" fill="#fbfbfb" stroke="#c4c4c4" stroke-width="1"/><rect x="5.6" y="3.3" width="12.4" height="1.9" rx="0.5" fill="#ef8d52"/><path d="M2.4 9.5 H45.6 Q47 9.5 47 11 L46 36.6 Q45.9 38 44.5 38 H3.5 Q2.1 38 2 36.6 L1 11 Q1 9.5 2.4 9.5 Z" fill="url(#fg)"/><path d="M1 25.5 L47 17.5 V11 Q47 9.5 45.4 9.5 H2.6 Q1 9.5 1 11 Z" fill="#fff" opacity="0.10"/><path d="M2.4 9.5 H45.6 Q47 9.5 47 11 L46 36.6 Q45.9 38 44.5 38 H3.5 Q2.1 38 2 36.6 L1 11 Q1 9.5 2.4 9.5 Z" fill="url(#fsh)"/><path d="M2.6 10 H45.4 Q46.5 10 46.5 11 L45.5 36.5 Q45.4 37.5 44.4 37.5 H3.6 Q2.6 37.5 2.5 36.5 L1.5 11 Q1.5 10 2.6 10 Z" fill="none" stroke="#cf5a22" stroke-width="1" opacity="0.55"/><path d="M2.4 11 H45.6" stroke="#fff" stroke-width="0.9" opacity="0.45"/></svg>
<div class="lbl" style="left:555.90px;top:188px;letter-spacing:0.20px">cmd</div>
<svg style="left:684px;top:146px" width="48" height="40" viewBox="0 0 48 40"><rect x="2.5" y="37" width="43" height="2.2" rx="1" fill="#000" opacity="0.12"/><path d="M2.6 11 V2.6 Q2.6 1.5 3.8 1.5 H19.2 L22.8 4.8 H44.4 Q45.6 4.8 45.6 6 V11 Z" fill="#fbfbfb" stroke="#c4c4c4" stroke-width="1"/><rect x="5.6" y="3.3" width="12.4" height="1.9" rx="0.5" fill="#ef8d52"/><path d="M2.4 9.5 H45.6 Q47 9.5 47 11 L46 36.6 Q45.9 38 44.5 38 H3.5 Q2.1 38 2 36.6 L1 11 Q1 9.5 2.4 9.5 Z" fill="url(#fg)"/><path d="M1 25.5 L47 17.5 V11 Q47 9.5 45.4 9.5 H2.6 Q1 9.5 1 11 Z" fill="#fff" opacity="0.10"/><path d="M2.4 9.5 H45.6 Q47 9.5 47 11 L46 36.6 Q45.9 38 44.5 38 H3.5 Q2.1 38 2 36.6 L1 11 Q1 9.5 2.4 9.5 Z" fill="url(#fsh)"/><path d="M2.6 10 H45.4 Q46.5 10 46.5 11 L45.5 36.5 Q45.4 37.5 44.4 37.5 H3.6 Q2.6 37.5 2.5 36.5 L1.5 11 Q1.5 10 2.6 10 Z" fill="none" stroke="#cf5a22" stroke-width="1" opacity="0.55"/><path d="M2.4 11 H45.6" stroke="#fff" stroke-width="0.9" opacity="0.45"/></svg>
<div class="lbl" style="left:648.90px;top:188px;letter-spacing:0.20px">common</div>
<svg style="left:777px;top:146px" width="48" height="40" viewBox="0 0 48 40"><rect x="2.5" y="37" width="43" height="2.2" rx="1" fill="#000" opacity="0.12"/><path d="M2.6 11 V2.6 Q2.6 1.5 3.8 1.5 H19.2 L22.8 4.8 H44.4 Q45.6 4.8 45.6 6 V11 Z" fill="#fbfbfb" stroke="#c4c4c4" stroke-width="1"/><rect x="5.6" y="3.3" width="12.4" height="1.9" rx="0.5" fill="#ef8d52"/><path d="M2.4 9.5 H45.6 Q47 9.5 47 11 L46 36.6 Q45.9 38 44.5 38 H3.5 Q2.1 38 2 36.6 L1 11 Q1 9.5 2.4 9.5 Z" fill="url(#fg)"/><path d="M1 25.5 L47 17.5 V11 Q47 9.5 45.4 9.5 H2.6 Q1 9.5 1 11 Z" fill="#fff" opacity="0.10"/><path d="M2.4 9.5 H45.6 Q47 9.5 47 11 L46 36.6 Q45.9 38 44.5 38 H3.5 Q2.1 38 2 36.6 L1 11 Q1 9.5 2.4 9.5 Z" fill="url(#fsh)"/><path d="M2.6 10 H45.4 Q46.5 10 46.5 11 L45.5 36.5 Q45.4 37.5 44.4 37.5 H3.6 Q2.6 37.5 2.5 36.5 L1.5 11 Q1.5 10 2.6 10 Z" fill="none" stroke="#cf5a22" stroke-width="1" opacity="0.55"/><path d="M2.4 11 H45.6" stroke="#fff" stroke-width="0.9" opacity="0.45"/></svg>
<div class="lbl" style="left:741.80px;top:188px;letter-spacing:0.00px">configs</div>
<svg style="left:870px;top:146px" width="48" height="40" viewBox="0 0 48 40"><rect x="2.5" y="37" width="43" height="2.2" rx="1" fill="#000" opacity="0.12"/><path d="M2.6 11 V2.6 Q2.6 1.5 3.8 1.5 H19.2 L22.8 4.8 H44.4 Q45.6 4.8 45.6 6 V11 Z" fill="#fbfbfb" stroke="#c4c4c4" stroke-width="1"/><rect x="5.6" y="3.3" width="12.4" height="1.9" rx="0.5" fill="#ef8d52"/><path d="M2.4 9.5 H45.6 Q47 9.5 47 11 L46 36.6 Q45.9 38 44.5 38 H3.5 Q2.1 38 2 36.6 L1 11 Q1 9.5 2.4 9.5 Z" fill="url(#fg)"/><path d="M1 25.5 L47 17.5 V11 Q47 9.5 45.4 9.5 H2.6 Q1 9.5 1 11 Z" fill="#fff" opacity="0.10"/><path d="M2.4 9.5 H45.6 Q47 9.5 47 11 L46 36.6 Q45.9 38 44.5 38 H3.5 Q2.1 38 2 36.6 L1 11 Q1 9.5 2.4 9.5 Z" fill="url(#fsh)"/><path d="M2.6 10 H45.4 Q46.5 10 46.5 11 L45.5 36.5 Q45.4 37.5 44.4 37.5 H3.6 Q2.6 37.5 2.5 36.5 L1.5 11 Q1.5 10 2.6 10 Z" fill="none" stroke="#cf5a22" stroke-width="1" opacity="0.55"/><path d="M2.4 11 H45.6" stroke="#fff" stroke-width="0.9" opacity="0.45"/></svg>
<div class="lbl" style="left:834.90px;top:188px;letter-spacing:0.20px">disk</div>
<svg style="left:963px;top:146px" width="48" height="40" viewBox="0 0 48 40"><rect x="2.5" y="37" width="43" height="2.2" rx="1" fill="#000" opacity="0.12"/><path d="M2.6 11 V2.6 Q2.6 1.5 3.8 1.5 H19.2 L22.8 4.8 H44.4 Q45.6 4.8 45.6 6 V11 Z" fill="#fbfbfb" stroke="#c4c4c4" stroke-width="1"/><rect x="5.6" y="3.3" width="12.4" height="1.9" rx="0.5" fill="#ef8d52"/><path d="M2.4 9.5 H45.6 Q47 9.5 47 11 L46 36.6 Q45.9 38 44.5 38 H3.5 Q2.1 38 2 36.6 L1 11 Q1 9.5 2.4 9.5 Z" fill="url(#fg)"/><path d="M1 25.5 L47 17.5 V11 Q47 9.5 45.4 9.5 H2.6 Q1 9.5 1 11 Z" fill="#fff" opacity="0.10"/><path d="M2.4 9.5 H45.6 Q47 9.5 47 11 L46 36.6 Q45.9 38 44.5 38 H3.5 Q2.1 38 2 36.6 L1 11 Q1 9.5 2.4 9.5 Z" fill="url(#fsh)"/><path d="M2.6 10 H45.4 Q46.5 10 46.5 11 L45.5 36.5 Q45.4 37.5 44.4 37.5 H3.6 Q2.6 37.5 2.5 36.5 L1.5 11 Q1.5 10 2.6 10 Z" fill="none" stroke="#cf5a22" stroke-width="1" opacity="0.55"/><path d="M2.4 11 H45.6" stroke="#fff" stroke-width="0.9" opacity="0.45"/></svg>
<div class="lbl" style="left:927.90px;top:188px;letter-spacing:0.20px">doc</div>
<svg style="left:1056px;top:146px" width="48" height="40" viewBox="0 0 48 40"><rect x="2.5" y="37" width="43" height="2.2" rx="1" fill="#000" opacity="0.12"/><path d="M2.6 11 V2.6 Q2.6 1.5 3.8 1.5 H19.2 L22.8 4.8 H44.4 Q45.6 4.8 45.6 6 V11 Z" fill="#fbfbfb" stroke="#c4c4c4" stroke-width="1"/><rect x="5.6" y="3.3" width="12.4" height="1.9" rx="0.5" fill="#ef8d52"/><path d="M2.4 9.5 H45.6 Q47 9.5 47 11 L46 36.6 Q45.9 38 44.5 38 H3.5 Q2.1 38 2 36.6 L1 11 Q1 9.5 2.4 9.5 Z" fill="url(#fg)"/><path d="M1 25.5 L47 17.5 V11 Q47 9.5 45.4 9.5 H2.6 Q1 9.5 1 11 Z" fill="#fff" opacity="0.10"/><path d="M2.4 9.5 H45.6 Q47 9.5 47 11 L46 36.6 Q45.9 38 44.5 38 H3.5 Q2.1 38 2 36.6 L1 11 Q1 9.5 2.4 9.5 Z" fill="url(#fsh)"/><path d="M2.6 10 H45.4 Q46.5 10 46.5 11 L45.5 36.5 Q45.4 37.5 44.4 37.5 H3.6 Q2.6 37.5 2.5 36.5 L1.5 11 Q1.5 10 2.6 10 Z" fill="none" stroke="#cf5a22" stroke-width="1" opacity="0.55"/><path d="M2.4 11 H45.6" stroke="#fff" stroke-width="0.9" opacity="0.45"/></svg>
<div class="lbl" style="left:1020.90px;top:188px;letter-spacing:0.20px">drivers</div>
<svg style="left:312px;top:220px" width="48" height="40" viewBox="0 0 48 40"><rect x="2.5" y="37" width="43" height="2.2" rx="1" fill="#000" opacity="0.12"/><path d="M2.6 11 V2.6 Q2.6 1.5 3.8 1.5 H19.2 L22.8 4.8 H44.4 Q45.6 4.8 45.6 6 V11 Z" fill="#fbfbfb" stroke="#c4c4c4" stroke-width="1"/><rect x="5.6" y="3.3" width="12.4" height="1.9" rx="0.5" fill="#ef8d52"/><path d="M2.4 9.5 H45.6 Q47 9.5 47 11 L46 36.6 Q45.9 38 44.5 38 H3.5 Q2.1 38 2 36.6 L1 11 Q1 9.5 2.4 9.5 Z" fill="url(#fg)"/><path d="M1 25.5 L47 17.5 V11 Q47 9.5 45.4 9.5 H2.6 Q1 9.5 1 11 Z" fill="#fff" opacity="0.10"/><path d="M2.4 9.5 H45.6 Q47 9.5 47 11 L46 36.6 Q45.9 38 44.5 38 H3.5 Q2.1 38 2 36.6 L1 11 Q1 9.5 2.4 9.5 Z" fill="url(#fsh)"/><path d="M2.6 10 H45.4 Q46.5 10 46.5 11 L45.5 36.5 Q45.4 37.5 44.4 37.5 H3.6 Q2.6 37.5 2.5 36.5 L1.5 11 Q1.5 10 2.6 10 Z" fill="none" stroke="#cf5a22" stroke-width="1" opacity="0.55"/><path d="M2.4 11 H45.6" stroke="#fff" stroke-width="0.9" opacity="0.45"/></svg>
<div class="lbl" style="left:276.90px;top:262px;letter-spacing:0.20px">dts</div>
<svg style="left:405px;top:220px" width="48" height="40" viewBox="0 0 48 40"><rect x="2.5" y="37" width="43" height="2.2" rx="1" fill="#000" opacity="0.12"/><path d="M2.6 11 V2.6 Q2.6 1.5 3.8 1.5 H19.2 L22.8 4.8 H44.4 Q45.6 4.8 45.6 6 V11 Z" fill="#fbfbfb" stroke="#c4c4c4" stroke-width="1"/><rect x="5.6" y="3.3" width="12.4" height="1.9" rx="0.5" fill="#ef8d52"/><path d="M2.4 9.5 H45.6 Q47 9.5 47 11 L46 36.6 Q45.9 38 44.5 38 H3.5 Q2.1 38 2 36.6 L1 11 Q1 9.5 2.4 9.5 Z" fill="url(#fg)"/><path d="M1 25.5 L47 17.5 V11 Q47 9.5 45.4 9.5 H2.6 Q1 9.5 1 11 Z" fill="#fff" opacity="0.10"/><path d="M2.4 9.5 H45.6 Q47 9.5 47 11 L46 36.6 Q45.9 38 44.5 38 H3.5 Q2.1 38 2 36.6 L1 11 Q1 9.5 2.4 9.5 Z" fill="url(#fsh)"/><path d="M2.6 10 H45.4 Q46.5 10 46.5 11 L45.5 36.5 Q45.4 37.5 44.4 37.5 H3.6 Q2.6 37.5 2.5 36.5 L1.5 11 Q1.5 10 2.6 10 Z" fill="none" stroke="#cf5a22" stroke-width="1" opacity="0.55"/><path d="M2.4 11 H45.6" stroke="#fff" stroke-width="0.9" opacity="0.45"/></svg>
<div class="lbl" style="left:369.82px;top:262px;letter-spacing:0.05px">examples</div>
<svg style="left:498px;top:220px" width="48" height="40" viewBox="0 0 48 40"><rect x="2.5" y="37" width="43" height="2.2" rx="1" fill="#000" opacity="0.12"/><path d="M2.6 11 V2.6 Q2.6 1.5 3.8 1.5 H19.2 L22.8 4.8 H44.4 Q45.6 4.8 45.6 6 V11 Z" fill="#fbfbfb" stroke="#c4c4c4" stroke-width="1"/><rect x="5.6" y="3.3" width="12.4" height="1.9" rx="0.5" fill="#ef8d52"/><path d="M2.4 9.5 H45.6 Q47 9.5 47 11 L46 36.6 Q45.9 38 44.5 38 H3.5 Q2.1 38 2 36.6 L1 11 Q1 9.5 2.4 9.5 Z" fill="url(#fg)"/><path d="M1 25.5 L47 17.5 V11 Q47 9.5 45.4 9.5 H2.6 Q1 9.5 1 11 Z" fill="#fff" opacity="0.10"/><path d="M2.4 9.5 H45.6 Q47 9.5 47 11 L46 36.6 Q45.9 38 44.5 38 H3.5 Q2.1 38 2 36.6 L1 11 Q1 9.5 2.4 9.5 Z" fill="url(#fsh)"/><path d="M2.6 10 H45.4 Q46.5 10 46.5 11 L45.5 36.5 Q45.4 37.5 44.4 37.5 H3.6 Q2.6 37.5 2.5 36.5 L1.5 11 Q1.5 10 2.6 10 Z" fill="none" stroke="#cf5a22" stroke-width="1" opacity="0.55"/><path d="M2.4 11 H45.6" stroke="#fff" stroke-width="0.9" opacity="0.45"/></svg>
<div class="lbl" style="left:462.90px;top:262px;letter-spacing:0.20px">fs</div>
<svg style="left:591px;top:220px" width="48" height="40" viewBox="0 0 48 40"><rect x="2.5" y="37" width="43" height="2.2" rx="1" fill="#000" opacity="0.12"/><path d="M2.6 11 V2.6 Q2.6 1.5 3.8 1.5 H19.2 L22.8 4.8 H44.4 Q45.6 4.8 45.6 6 V11 Z" fill="#fbfbfb" stroke="#c4c4c4" stroke-width="1"/><rect x="5.6" y="3.3" width="12.4" height="1.9" rx="0.5" fill="#ef8d52"/><path d="M2.4 9.5 H45.6 Q47 9.5 47 11 L46 36.6 Q45.9 38 44.5 38 H3.5 Q2.1 38 2 36.6 L1 11 Q1 9.5 2.4 9.5 Z" fill="url(#fg)"/><path d="M1 25.5 L47 17.5 V11 Q47 9.5 45.4 9.5 H2.6 Q1 9.5 1 11 Z" fill="#fff" opacity="0.10"/><path d="M2.4 9.5 H45.6 Q47 9.5 47 11 L46 36.6 Q45.9 38 44.5 38 H3.5 Q2.1 38 2 36.6 L1 11 Q1 9.5 2.4 9.5 Z" fill="url(#fsh)"/><path d="M2.6 10 H45.4 Q46.5 10 46.5 11 L45.5 36.5 Q45.4 37.5 44.4 37.5 H3.6 Q2.6 37.5 2.5 36.5 L1.5 11 Q1.5 10 2.6 10 Z" fill="none" stroke="#cf5a22" stroke-width="1" opacity="0.55"/><path d="M2.4 11 H45.6" stroke="#fff" stroke-width="0.9" opacity="0.45"/></svg>
<div class="lbl" style="left:555.90px;top:262px;letter-spacing:0.20px">include</div>
<svg style="left:684px;top:220px" width="48" height="40" viewBox="0 0 48 40"><rect x="2.5" y="37" width="43" height="2.2" rx="1" fill="#000" opacity="0.12"/><path d="M2.6 11 V2.6 Q2.6 1.5 3.8 1.5 H19.2 L22.8 4.8 H44.4 Q45.6 4.8 45.6 6 V11 Z" fill="#fbfbfb" stroke="#c4c4c4" stroke-width="1"/><rect x="5.6" y="3.3" width="12.4" height="1.9" rx="0.5" fill="#ef8d52"/><path d="M2.4 9.5 H45.6 Q47 9.5 47 11 L46 36.6 Q45.9 38 44.5 38 H3.5 Q2.1 38 2 36.6 L1 11 Q1 9.5 2.4 9.5 Z" fill="url(#fg)"/><path d="M1 25.5 L47 17.5 V11 Q47 9.5 45.4 9.5 H2.6 Q1 9.5 1 11 Z" fill="#fff" opacity="0.10"/><path d="M2.4 9.5 H45.6 Q47 9.5 47 11 L46 36.6 Q45.9 38 44.5 38 H3.5 Q2.1 38 2 36.6 L1 11 Q1 9.5 2.4 9.5 Z" fill="url(#fsh)"/><path d="M2.6 10 H45.4 Q46.5 10 46.5 11 L45.5 36.5 Q45.4 37.5 44.4 37.5 H3.6 Q2.6 37.5 2.5 36.5 L1.5 11 Q1.5 10 2.6 10 Z" fill="none" stroke="#cf5a22" stroke-width="1" opacity="0.55"/><path d="M2.4 11 H45.6" stroke="#fff" stroke-width="0.9" opacity="0.45"/></svg>
<div class="lbl" style="left:648.90px;top:262px;letter-spacing:0.20px">lib</div>
<svg style="left:777px;top:220px" width="48" height="40" viewBox="0 0 48 40"><rect x="2.5" y="37" width="43" height="2.2" rx="1" fill="#000" opacity="0.12"/><path d="M2.6 11 V2.6 Q2.6 1.5 3.8 1.5 H19.2 L22.8 4.8 H44.4 Q45.6 4.8 45.6 6 V11 Z" fill="#fbfbfb" stroke="#c4c4c4" stroke-width="1"/><rect x="5.6" y="3.3" width="12.4" height="1.9" rx="0.5" fill="#ef8d52"/><path d="M2.4 9.5 H45.6 Q47 9.5 47 11 L46 36.6 Q45.9 38 44.5 38 H3.5 Q2.1 38 2 36.6 L1 11 Q1 9.5 2.4 9.5 Z" fill="url(#fg)"/><path d="M1 25.5 L47 17.5 V11 Q47 9.5 45.4 9.5 H2.6 Q1 9.5 1 11 Z" fill="#fff" opacity="0.10"/><path d="M2.4 9.5 H45.6 Q47 9.5 47 11 L46 36.6 Q45.9 38 44.5 38 H3.5 Q2.1 38 2 36.6 L1 11 Q1 9.5 2.4 9.5 Z" fill="url(#fsh)"/><path d="M2.6 10 H45.4 Q46.5 10 46.5 11 L45.5 36.5 Q45.4 37.5 44.4 37.5 H3.6 Q2.6 37.5 2.5 36.5 L1.5 11 Q1.5 10 2.6 10 Z" fill="none" stroke="#cf5a22" stroke-width="1" opacity="0.55"/><path d="M2.4 11 H45.6" stroke="#fff" stroke-width="0.9" opacity="0.45"/></svg>
<div class="lbl" style="left:741.60px;top:262px;letter-spacing:-0.40px">Licenses</div>
<svg style="left:870px;top:220px" width="48" height="40" viewBox="0 0 48 40"><rect x="2.5" y="37" width="43" height="2.2" rx="1" fill="#000" opacity="0.12"/><path d="M2.6 11 V2.6 Q2.6 1.5 3.8 1.5 H19.2 L22.8 4.8 H44.4 Q45.6 4.8 45.6 6 V11 Z" fill="#fbfbfb" stroke="#c4c4c4" stroke-width="1"/><rect x="5.6" y="3.3" width="12.4" height="1.9" rx="0.5" fill="#ef8d52"/><path d="M2.4 9.5 H45.6 Q47 9.5 47 11 L46 36.6 Q45.9 38 44.5 38 H3.5 Q2.1 38 2 36.6 L1 11 Q1 9.5 2.4 9.5 Z" fill="url(#fg)"/><path d="M1 25.5 L47 17.5 V11 Q47 9.5 45.4 9.5 H2.6 Q1 9.5 1 11 Z" fill="#fff" opacity="0.10"/><path d="M2.4 9.5 H45.6 Q47 9.5 47 11 L46 36.6 Q45.9 38 44.5 38 H3.5 Q2.1 38 2 36.6 L1 11 Q1 9.5 2.4 9.5 Z" fill="url(#fsh)"/><path d="M2.6 10 H45.4 Q46.5 10 46.5 11 L45.5 36.5 Q45.4 37.5 44.4 37.5 H3.6 Q2.6 37.5 2.5 36.5 L1.5 11 Q1.5 10 2.6 10 Z" fill="none" stroke="#cf5a22" stroke-width="1" opacity="0.55"/><path d="M2.4 11 H45.6" stroke="#fff" stroke-width="0.9" opacity="0.45"/></svg>
<div class="lbl" style="left:834.90px;top:262px;letter-spacing:0.20px">net</div>
<svg style="left:963px;top:220px" width="48" height="40" viewBox="0 0 48 40"><rect x="2.5" y="37" width="43" height="2.2" rx="1" fill="#000" opacity="0.12"/><path d="M2.6 11 V2.6 Q2.6 1.5 3.8 1.5 H19.2 L22.8 4.8 H44.4 Q45.6 4.8 45.6 6 V11 Z" fill="#fbfbfb" stroke="#c4c4c4" stroke-width="1"/><rect x="5.6" y="3.3" width="12.4" height="1.9" rx="0.5" fill="#ef8d52"/><path d="M2.4 9.5 H45.6 Q47 9.5 47 11 L46 36.6 Q45.9 38 44.5 38 H3.5 Q2.1 38 2 36.6 L1 11 Q1 9.5 2.4 9.5 Z" fill="url(#fg)"/><path d="M1 25.5 L47 17.5 V11 Q47 9.5 45.4 9.5 H2.6 Q1 9.5 1 11 Z" fill="#fff" opacity="0.10"/><path d="M2.4 9.5 H45.6 Q47 9.5 47 11 L46 36.6 Q45.9 38 44.5 38 H3.5 Q2.1 38 2 36.6 L1 11 Q1 9.5 2.4 9.5 Z" fill="url(#fsh)"/><path d="M2.6 10 H45.4 Q46.5 10 46.5 11 L45.5 36.5 Q45.4 37.5 44.4 37.5 H3.6 Q2.6 37.5 2.5 36.5 L1.5 11 Q1.5 10 2.6 10 Z" fill="none" stroke="#cf5a22" stroke-width="1" opacity="0.55"/><path d="M2.4 11 H45.6" stroke="#fff" stroke-width="0.9" opacity="0.45"/></svg>
<div class="lbl" style="left:928.10px;top:262px;letter-spacing:0.60px">post</div>
<svg style="left:1056px;top:220px" width="48" height="40" viewBox="0 0 48 40"><rect x="2.5" y="37" width="43" height="2.2" rx="1" fill="#000" opacity="0.12"/><path d="M2.6 11 V2.6 Q2.6 1.5 3.8 1.5 H19.2 L22.8 4.8 H44.4 Q45.6 4.8 45.6 6 V11 Z" fill="#fbfbfb" stroke="#c4c4c4" stroke-width="1"/><rect x="5.6" y="3.3" width="12.4" height="1.9" rx="0.5" fill="#ef8d52"/><path d="M2.4 9.5 H45.6 Q47 9.5 47 11 L46 36.6 Q45.9 38 44.5 38 H3.5 Q2.1 38 2 36.6 L1 11 Q1 9.5 2.4 9.5 Z" fill="url(#fg)"/><path d="M1 25.5 L47 17.5 V11 Q47 9.5 45.4 9.5 H2.6 Q1 9.5 1 11 Z" fill="#fff" opacity="0.10"/><path d="M2.4 9.5 H45.6 Q47 9.5 47 11 L46 36.6 Q45.9 38 44.5 38 H3.5 Q2.1 38 2 36.6 L1 11 Q1 9.5 2.4 9.5 Z" fill="url(#fsh)"/><path d="M2.6 10 H45.4 Q46.5 10 46.5 11 L45.5 36.5 Q45.4 37.5 44.4 37.5 H3.6 Q2.6 37.5 2.5 36.5 L1.5 11 Q1.5 10 2.6 10 Z" fill="none" stroke="#cf5a22" stroke-width="1" opacity="0.55"/><path d="M2.4 11 H45.6" stroke="#fff" stroke-width="0.9" opacity="0.45"/></svg>
<div class="lbl" style="left:1020.90px;top:262px;letter-spacing:0.20px">scripts</div>
<svg style="left:312px;top:295px" width="48" height="40" viewBox="0 0 48 40"><rect x="2.5" y="37" width="43" height="2.2" rx="1" fill="#000" opacity="0.12"/><path d="M2.6 11 V2.6 Q2.6 1.5 3.8 1.5 H19.2 L22.8 4.8 H44.4 Q45.6 4.8 45.6 6 V11 Z" fill="#fbfbfb" stroke="#c4c4c4" stroke-width="1"/><rect x="5.6" y="3.3" width="12.4" height="1.9" rx="0.5" fill="#ef8d52"/><path d="M2.4 9.5 H45.6 Q47 9.5 47 11 L46 36.6 Q45.9 38 44.5 38 H3.5 Q2.1 38 2 36.6 L1 11 Q1 9.5 2.4 9.5 Z" fill="url(#fg)"/><path d="M1 25.5 L47 17.5 V11 Q47 9.5 45.4 9.5 H2.6 Q1 9.5 1 11 Z" fill="#fff" opacity="0.10"/><path d="M2.4 9.5 H45.6 Q47 9.5 47 11 L46 36.6 Q45.9 38 44.5 38 H3.5 Q2.1 38 2 36.6 L1 11 Q1 9.5 2.4 9.5 Z" fill="url(#fsh)"/><path d="M2.6 10 H45.4 Q46.5 10 46.5 11 L45.5 36.5 Q45.4 37.5 44.4 37.5 H3.6 Q2.6 37.5 2.5 36.5 L1.5 11 Q1.5 10 2.6 10 Z" fill="none" stroke="#cf5a22" stroke-width="1" opacity="0.55"/><path d="M2.4 11 H45.6" stroke="#fff" stroke-width="0.9" opacity="0.45"/></svg>
<div class="lbl" style="left:276.90px;top:337px;letter-spacing:0.20px">test</div>
<svg style="left:405px;top:295px" width="48" height="40" viewBox="0 0 48 40"><rect x="2.5" y="37" width="43" height="2.2" rx="1" fill="#000" opacity="0.12"/><path d="M2.6 11 V2.6 Q2.6 1.5 3.8 1.5 H19.2 L22.8 4.8 H44.4 Q45.6 4.8 45.6 6 V11 Z" fill="#fbfbfb" stroke="#c4c4c4" stroke-width="1"/><rect x="5.6" y="3.3" width="12.4" height="1.9" rx="0.5" fill="#ef8d52"/><path d="M2.4 9.5 H45.6 Q47 9.5 47 11 L46 36.6 Q45.9 38 44.5 38 H3.5 Q2.1 38 2 36.6 L1 11 Q1 9.5 2.4 9.5 Z" fill="url(#fg)"/><path d="M1 25.5 L47 17.5 V11 Q47 9.5 45.4 9.5 H2.6 Q1 9.5 1 11 Z" fill="#fff" opacity="0.10"/><path d="M2.4 9.5 H45.6 Q47 9.5 47 11 L46 36.6 Q45.9 38 44.5 38 H3.5 Q2.1 38 2 36.6 L1 11 Q1 9.5 2.4 9.5 Z" fill="url(#fsh)"/><path d="M2.6 10 H45.4 Q46.5 10 46.5 11 L45.5 36.5 Q45.4 37.5 44.4 37.5 H3.6 Q2.6 37.5 2.5 36.5 L1.5 11 Q1.5 10 2.6 10 Z" fill="none" stroke="#cf5a22" stroke-width="1" opacity="0.55"/><path d="M2.4 11 H45.6" stroke="#fff" stroke-width="0.9" opacity="0.45"/></svg>
<div class="lbl" style="left:369.90px;top:337px;letter-spacing:0.20px">tools</div>
<svg style="left:503px;top:288px" width="38" height="47" viewBox="0 0 38 47"><path d="M1.5 1 H26 L36.5 10.5 V45 H1.5 Z" fill="#000" opacity="0.10" transform="translate(0,1)"/><path d="M1.5 0.5 H26 L36.5 10 V44.5 H1.5 Z" fill="url(#pg)" stroke="#a9a9a9" stroke-width="1"/><path d="M26 0.5 C27 4 27 7 25.6 9.6 C29 8.6 33 9 36.5 10 Z" fill="url(#cg)" stroke="#b4b4b4" stroke-width="0.6"/><path d="M6.0 6.5 H22.0" stroke="#5b8db3" stroke-width="0.95" stroke-dasharray="2.6 0.5 3.4 0.5" opacity="0.9"/><path d="M6.0 8.5 H24.0" stroke="#5b8db3" stroke-width="0.95" stroke-dasharray="2.6 0.5 3.4 0.5" opacity="0.9"/><path d="M6.0 10.5 H15.0" stroke="#5b8db3" stroke-width="0.95" stroke-dasharray="2.6 0.5 3.4 0.5" opacity="0.9"/><path d="M6.0 12.5 H13.0" stroke="#5b8db3" stroke-width="0.95" stroke-dasharray="2.6 0.5 3.4 0.5" opacity="0.9"/><path d="M6.0 15.5 H9.0" stroke="#a868d6" stroke-width="0.95" stroke-dasharray="2.6 0.5 3.4 0.5" opacity="0.9"/><path d="M9.6 15.5 H15.0" stroke="#c55fa6" stroke-width="0.95" stroke-dasharray="2.6 0.5 3.4 0.5" opacity="0.9"/><path d="M6.0 17.5 H9.0" stroke="#a868d6" stroke-width="0.95" stroke-dasharray="2.6 0.5 3.4 0.5" opacity="0.9"/><path d="M9.6 17.5 H14.2" stroke="#c55fa6" stroke-width="0.95" stroke-dasharray="2.6 0.5 3.4 0.5" opacity="0.9"/><path d="M14.8 17.5 H22.8" stroke="#5b8db3" stroke-width="0.95" stroke-dasharray="2.6 0.5 3.4 0.5" opacity="0.9"/><path d="M6.0 20.5 H8.2" stroke="#62cc5e" stroke-width="0.95" stroke-dasharray="2.6 0.5 3.4 0.5" opacity="0.9"/><path d="M8.6 20.5 H11.0" stroke="#9a9a9a" stroke-width="0.95" stroke-dasharray="2.6 0.5 3.4 0.5" opacity="0.9"/><path d="M6.0 22.5 H7.0" stroke="#9a9a9a" stroke-width="0.95" stroke-dasharray="2.6 0.5 3.4 0.5" opacity="0.9"/><path d="M6.0 24.5 H8.8" stroke="#62cc5e" stroke-width="0.95" stroke-dasharray="2.6 0.5 3.4 0.5" opacity="0.9"/><path d="M9.0 24.5 H11.0" stroke="#9a9a9a" stroke-width="0.95" stroke-dasharray="2.6 0.5 3.4 0.5" opacity="0.9"/><path d="M15.0 24.5 H22.0" stroke="#5b8db3" stroke-width="0.95" stroke-dasharray="2.6 0.5 3.4 0.5" opacity="0.9"/><path d="M6.0 26.5 H9.0" stroke="#62cc5e" stroke-width="0.95" stroke-dasharray="2.6 0.5 3.4 0.5" opacity="0.9"/><path d="M9.2 26.5 H12.0" stroke="#9a9a9a" stroke-width="0.95" stroke-dasharray="2.6 0.5 3.4 0.5" opacity="0.9"/><path d="M15.0 26.5 H26.0" stroke="#5b8db3" stroke-width="0.95" stroke-dasharray="2.6 0.5 3.4 0.5" opacity="0.9"/><path d="M6.0 28.5 H8.4" stroke="#62cc5e" stroke-width="0.95" stroke-dasharray="2.6 0.5 3.4 0.5" opacity="0.9"/><path d="M8.8 28.5 H11.0" stroke="#9a9a9a" stroke-width="0.95" stroke-dasharray="2.6 0.5 3.4 0.5" opacity="0.9"/><path d="M15.0 28.5 H25.4" stroke="#5b8db3" stroke-width="0.95" stroke-dasharray="2.6 0.5 3.4 0.5" opacity="0.9"/><path d="M6.0 30.5 H8.2" stroke="#62cc5e" stroke-width="0.95" stroke-dasharray="2.6 0.5 3.4 0.5" opacity="0.9"/><path d="M8.6 30.5 H11.0" stroke="#9a9a9a" stroke-width="0.95" stroke-dasharray="2.6 0.5 3.4 0.5" opacity="0.9"/><path d="M15.0 30.5 H27.0" stroke="#5b8db3" stroke-width="0.95" stroke-dasharray="2.6 0.5 3.4 0.5" opacity="0.9"/><path d="M6.0 33.5 H10.2" stroke="#9a9a9a" stroke-width="0.95" stroke-dasharray="2.6 0.5 3.4 0.5" opacity="0.9"/><path d="M10.6 33.5 H30.0" stroke="#c55fa6" stroke-width="0.95" stroke-dasharray="2.6 0.5 3.4 0.5" opacity="0.9"/><path d="M6.0 35.5 H11.6" stroke="#9a9a9a" stroke-width="0.95" stroke-dasharray="2.6 0.5 3.4 0.5" opacity="0.9"/><path d="M12.0 35.5 H27.0" stroke="#c55fa6" stroke-width="0.95" stroke-dasharray="2.6 0.5 3.4 0.5" opacity="0.9"/><path d="M6.0 37.5 H9.0" stroke="#d84545" stroke-width="0.95" stroke-dasharray="2.6 0.5 3.4 0.5" opacity="0.9"/><path d="M9.4 37.5 H13.0" stroke="#9a9a9a" stroke-width="0.95" stroke-dasharray="2.6 0.5 3.4 0.5" opacity="0.9"/><path d="M15.0 37.5 H31.0" stroke="#5b8db3" stroke-width="0.95" stroke-dasharray="2.6 0.5 3.4 0.5" opacity="0.9"/></svg>
<div class="lbl" style="left:462.90px;top:337px;letter-spacing:0.20px">build.sh</div>
<svg style="left:596px;top:288px" width="38" height="47" viewBox="0 0 38 47"><path d="M1.5 1 H26 L36.5 10.5 V45 H1.5 Z" fill="#000" opacity="0.10" transform="translate(0,1)"/><path d="M1.5 0.5 H26 L36.5 10 V44.5 H1.5 Z" fill="url(#pg)" stroke="#a9a9a9" stroke-width="1"/><path d="M26 0.5 C27 4 27 7 25.6 9.6 C29 8.6 33 9 36.5 10 Z" fill="url(#cg)" stroke="#b4b4b4" stroke-width="0.6"/><path d="M6.0 6.5 H22.0" stroke="#5b8db3" stroke-width="0.95" stroke-dasharray="2.6 0.5 3.4 0.5" opacity="0.9"/><path d="M6.0 8.5 H24.0" stroke="#5b8db3" stroke-width="0.95" stroke-dasharray="2.6 0.5 3.4 0.5" opacity="0.9"/><path d="M6.0 10.5 H15.0" stroke="#5b8db3" stroke-width="0.95" stroke-dasharray="2.6 0.5 3.4 0.5" opacity="0.9"/><path d="M6.0 12.5 H13.0" stroke="#5b8db3" stroke-width="0.95" stroke-dasharray="2.6 0.5 3.4 0.5" opacity="0.9"/><path d="M6.0 15.5 H9.0" stroke="#a868d6" stroke-width="0.95" stroke-dasharray="2.6 0.5 3.4 0.5" opacity="0.9"/><path d="M9.6 15.5 H15.0" stroke="#c55fa6" stroke-width="0.95" stroke-dasharray="2.6 0.5 3.4 0.5" opacity="0.9"/><path d="M6.0 17.5 H9.0" stroke="#a868d6" stroke-width="0.95" stroke-dasharray="2.6 0.5 3.4 0.5" opacity="0.9"/><path d="M9.6 17.5 H14.2" stroke="#c55fa6" stroke-width="0.95" stroke-dasharray="2.6 0.5 3.4 0.5" opacity="0.9"/><path d="M14.8 17.5 H22.8" stroke="#5b8db3" stroke-width="0.95" stroke-dasharray="2.6 0.5 3.4 0.5" opacity="0.9"/><path d="M6.0 20.5 H8.2" stroke="#62cc5e" stroke-width="0.95" stroke-dasharray="2.6 0.5 3.4 0.5" opacity="0.9"/><path d="M8.6 20.5 H11.0" stroke="#9a9a9a" stroke-width="0.95" stroke-dasharray="2.6 0.5 3.4 0.5" opacity="0.9"/><path d="M6.0 22.5 H7.0" stroke="#9a9a9a" stroke-width="0.95" stroke-dasharray="2.6 0.5 3.4 0.5" opacity="0.9"/><path d="M6.0 24.5 H8.8" stroke="#62cc5e" stroke-width="0.95" stroke-dasharray="2.6 0.5 3.4 0.5" opacity="0.9"/><path d="M9.0 24.5 H11.0" stroke="#9a9a9a" stroke-width="0.95" stroke-dasharray="2.6 0.5 3.4 0.5" opacity="0.9"/><path d="M15.0 24.5 H22.0" stroke="#5b8db3" stroke-width="0.95" stroke-dasharray="2.6 0.5 3.4 0.5" opacity="0.9"/><path d="M6.0 26.5 H9.0" stroke="#62cc5e" stroke-width="0.95" stroke-dasharray="2.6 0.5 3.4 0.5" opacity="0.9"/><path d="M9.2 26.5 H12.0" stroke="#9a9a9a" stroke-width="0.95" stroke-dasharray="2.6 0.5 3.4 0.5" opacity="0.9"/><path d="M15.0 26.5 H26.0" stroke="#5b8db3" stroke-width="0.95" stroke-dasharray="2.6 0.5 3.4 0.5" opacity="0.9"/><path d="M6.0 28.5 H8.4" stroke="#62cc5e" stroke-width="0.95" stroke-dasharray="2.6 0.5 3.4 0.5" opacity="0.9"/><path d="M8.8 28.5 H11.0" stroke="#9a9a9a" stroke-width="0.95" stroke-dasharray="2.6 0.5 3.4 0.5" opacity="0.9"/><path d="M15.0 28.5 H25.4" stroke="#5b8db3" stroke-width="0.95" stroke-dasharray="2.6 0.5 3.4 0.5" opacity="0.9"/><path d="M6.0 30.5 H8.2" stroke="#62cc5e" stroke-width="0.95" stroke-dasharray="2.6 0.5 3.4 0.5" opacity="0.9"/><path d="M8.6 30.5 H11.0" stroke="#9a9a9a" stroke-width="0.95" stroke-dasharray="2.6 0.5 3.4 0.5" opacity="0.9"/><path d="M15.0 30.5 H27.0" stroke="#5b8db3" stroke-width="0.95" stroke-dasharray="2.6 0.5 3.4 0.5" opacity="0.9"/><path d="M6.0 33.5 H10.2" stroke="#9a9a9a" stroke-width="0.95" stroke-dasharray="2.6 0.5 3.4 0.5" opacity="0.9"/><path d="M10.6 33.5 H30.0" stroke="#c55fa6" stroke-width="0.95" stroke-dasharray="2.6 0.5 3.4 0.5" opacity="0.9"/><path d="M6.0 35.5 H11.6" stroke="#9a9a9a" stroke-width="0.95" stroke-dasharray="2.6 0.5 3.4 0.5" opacity="0.9"/><path d="M12.0 35.5 H27.0" stroke="#c55fa6" stroke-width="0.95" stroke-dasharray="2.6 0.5 3.4 0.5" opacity="0.9"/><path d="M6.0 37.5 H9.0" stroke="#d84545" stroke-width="0.95" stroke-dasharray="2.6 0.5 3.4 0.5" opacity="0.9"/><path d="M9.4 37.5 H13.0" stroke="#9a9a9a" stroke-width="0.95" stroke-dasharray="2.6 0.5 3.4 0.5" opacity="0.9"/><path d="M15.0 37.5 H31.0" stroke="#5b8db3" stroke-width="0.95" stroke-dasharray="2.6 0.5 3.4 0.5" opacity="0.9"/></svg>
<div class="lbl" style="left:555.90px;top:337px;letter-spacing:0.20px">build_<br>myboard.<br>sh</div>
<svg style="left:689px;top:288px" width="38" height="47" viewBox="0 0 38 47"><path d="M1.5 1 H26 L36.5 10.5 V45 H1.5 Z" fill="#000" opacity="0.10" transform="translate(0,1)"/><path d="M1.5 0.5 H26 L36.5 10 V44.5 H1.5 Z" fill="url(#pg)" stroke="#a9a9a9" stroke-width="1"/><path d="M26 0.5 C27 4 27 7 25.6 9.6 C29 8.6 33 9 36.5 10 Z" fill="url(#cg)" stroke="#b4b4b4" stroke-width="0.6"/><path d="M6 8.5 H26.0" stroke="#8a8a8a" stroke-width="0.9" stroke-dasharray="2.6 0.5 3.4 0.5 1.8 0.5" opacity="0.62"/><path d="M6 10.5 H27.0" stroke="#8a8a8a" stroke-width="0.9" stroke-dasharray="3.6 0.5 2.2 0.5 2.8 0.5" opacity="0.62"/><path d="M6 12.5 H31.0" stroke="#8a8a8a" stroke-width="0.9" stroke-dasharray="3 0.5 4.2 0.5 2 0.5" opacity="0.62"/><path d="M6 14.5 H30.0" stroke="#8a8a8a" stroke-width="0.9" stroke-dasharray="2.6 0.5 3.4 0.5 1.8 0.5" opacity="0.62"/><path d="M6 16.5 H14.0" stroke="#8a8a8a" stroke-width="0.9" stroke-dasharray="3.6 0.5 2.2 0.5 2.8 0.5" opacity="0.62"/><path d="M6 20.5 H31.0" stroke="#8a8a8a" stroke-width="0.9" stroke-dasharray="3 0.5 4.2 0.5 2 0.5" opacity="0.62"/><path d="M6 22.5 H30.0" stroke="#8a8a8a" stroke-width="0.9" stroke-dasharray="2.6 0.5 3.4 0.5 1.8 0.5" opacity="0.62"/><path d="M6 24.5 H28.0" stroke="#8a8a8a" stroke-width="0.9" stroke-dasharray="3.6 0.5 2.2 0.5 2.8 0.5" opacity="0.62"/><path d="M6 26.5 H30.0" stroke="#8a8a8a" stroke-width="0.9" stroke-dasharray="3 0.5 4.2 0.5 2 0.5" opacity="0.62"/><path d="M6 28.5 H27.0" stroke="#8a8a8a" stroke-width="0.9" stroke-dasharray="2.6 0.5 3.4 0.5 1.8 0.5" opacity="0.62"/><path d="M6 32.5 H31.0" stroke="#8a8a8a" stroke-width="0.9" stroke-dasharray="3.6 0.5 2.2 0.5 2.8 0.5" opacity="0.62"/><path d="M6 34.5 H27.0" stroke="#8a8a8a" stroke-width="0.9" stroke-dasharray="3 0.5 4.2 0.5 2 0.5" opacity="0.62"/><path d="M6 36.5 H29.0" stroke="#8a8a8a" stroke-width="0.9" stroke-dasharray="2.6 0.5 3.4 0.5 1.8 0.5" opacity="0.62"/><path d="M6 38.5 H23.0" stroke="#8a8a8a" stroke-width="0.9" stroke-dasharray="3.6 0.5 2.2 0.5 2.8 0.5" opacity="0.62"/></svg>
<div class="lbl" style="left:648.90px;top:337px;letter-spacing:0.20px">config.mk</div>
<svg style="left:780px;top:290px" width="42" height="43" viewBox="0 0 42 43"><clipPath id="dclip"><path d="M21 2 L40 21 L21 40 L2 21 Z"/></clipPath><path d="M21 2.2 L40.2 21.4 L21 40.6 L1.8 21.4 Z" fill="#000" opacity="0.10" transform="translate(0,1.2)" stroke="#000" stroke-width="2" stroke-linejoin="round"/><path d="M21 1.6 L40.4 21 L21 40.4 L1.6 21 Z" fill="url(#dg2)" stroke="#9d8fcf" stroke-width="1.5" stroke-linejoin="round"/><g clip-path="url(#dclip)"><circle cx="12" cy="10.6" r="14.4" fill="none" stroke="#8a6cb0" stroke-width="2.2" stroke-dasharray="1.5 1.5" opacity="0.9"/><circle cx="12" cy="10.6" r="13.4" fill="url(#dg)"/><circle cx="42" cy="38" r="21.6" fill="#9c7cbc" opacity="0.55"/><circle cx="42" cy="38" r="22.8" fill="none" stroke="#e0d6f0" stroke-width="2" stroke-dasharray="1.4 1.4" opacity="0.8"/><circle cx="42" cy="38" r="21" fill="none" stroke="#d6caea" stroke-width="1.8" opacity="0.85"/><path d="M27 4 L40 17 L36 19 C33 17 30 15 28.4 12 Z" fill="#a898d4" opacity="0.6"/></g><path d="M21 1.6 L40.4 21" stroke="#86a8e0" stroke-width="0.8" opacity="0.6" fill="none"/></svg>
<div class="lbl" style="left:741.90px;top:337px;letter-spacing:0.20px">imxdownlo<br>ad</div>
<svg style="left:875px;top:288px" width="38" height="47" viewBox="0 0 38 47"><path d="M1.5 1 H26 L36.5 10.5 V45 H1.5 Z" fill="#000" opacity="0.10" transform="translate(0,1)"/><path d="M1.5 0.5 H26 L36.5 10 V44.5 H1.5 Z" fill="url(#pg)" stroke="#a9a9a9" stroke-width="1"/><path d="M26 0.5 C27 4 27 7 25.6 9.6 C29 8.6 33 9 36.5 10 Z" fill="url(#cg)" stroke="#b4b4b4" stroke-width="0.6"/><path d="M6 8.5 H26.0" stroke="#8a8a8a" stroke-width="0.9" stroke-dasharray="2.6 0.5 3.4 0.5 1.8 0.5" opacity="0.62"/><path d="M6 10.5 H27.0" stroke="#8a8a8a" stroke-width="0.9" stroke-dasharray="3.6 0.5 2.2 0.5 2.8 0.5" opacity="0.62"/><path d="M6 12.5 H31.0" stroke="#8a8a8a" stroke-width="0.9" stroke-dasharray="3 0.5 4.2 0.5 2 0.5" opacity="0.62"/><path d="M6 14.5 H30.0" stroke="#8a8a8a" stroke-width="0.9" stroke-dasharray="2.6 0.5 3.4 0.5 1.8 0.5" opacity="0.62"/><path d="M6 16.5 H14.0" stroke="#8a8a8a" stroke-width="0.9" stroke-dasharray="3.6 0.5 2.2 0.5 2.8 0.5" opacity="0.62"/><path d="M6 20.5 H31.0" stroke="#8a8a8a" stroke-width="0.9" stroke-dasharray="3 0.5 4.2 0.5 2 0.5" opacity="0.62"/><path d="M6 22.5 H30.0" stroke="#8a8a8a" stroke-width="0.9" stroke-dasharray="2.6 0.5 3.4 0.5 1.8 0.5" opacity="0.62"/><path d="M6 24.5 H28.0" stroke="#8a8a8a" stroke-width="0.9" stroke-dasharray="3.6 0.5 2.2 0.5 2.8 0.5" opacity="0.62"/><path d="M6 26.5 H30.0" stroke="#8a8a8a" stroke-width="0.9" stroke-dasharray="3 0.5 4.2 0.5 2 0.5" opacity="0.62"/><path d="M6 28.5 H27.0" stroke="#8a8a8a" stroke-width="0.9" stroke-dasharray="2.6 0.5 3.4 0.5 1.8 0.5" opacity="0.62"/><path d="M6 32.5 H31.0" stroke="#8a8a8a" stroke-width="0.9" stroke-dasharray="3.6 0.5 2.2 0.5 2.8 0.5" opacity="0.62"/><path d="M6 34.5 H27.0" stroke="#8a8a8a" stroke-width="0.9" stroke-dasharray="3 0.5 4.2 0.5 2 0.5" opacity="0.62"/><path d="M6 36.5 H29.0" stroke="#8a8a8a" stroke-width="0.9" stroke-dasharray="2.6 0.5 3.4 0.5 1.8 0.5" opacity="0.62"/><path d="M6 38.5 H23.0" stroke="#8a8a8a" stroke-width="0.9" stroke-dasharray="3.6 0.5 2.2 0.5 2.8 0.5" opacity="0.62"/></svg>
<div class="lbl" style="left:834.90px;top:337px;letter-spacing:0.20px">Kbuild</div>
<svg style="left:968px;top:288px" width="38" height="47" viewBox="0 0 38 47"><path d="M1.5 1 H26 L36.5 10.5 V45 H1.5 Z" fill="#000" opacity="0.10" transform="translate(0,1)"/><path d="M1.5 0.5 H26 L36.5 10 V44.5 H1.5 Z" fill="url(#pg)" stroke="#a9a9a9" stroke-width="1"/><path d="M26 0.5 C27 4 27 7 25.6 9.6 C29 8.6 33 9 36.5 10 Z" fill="url(#cg)" stroke="#b4b4b4" stroke-width="0.6"/><path d="M6 8.5 H26.0" stroke="#8a8a8a" stroke-width="0.9" stroke-dasharray="2.6 0.5 3.4 0.5 1.8 0.5" opacity="0.62"/><path d="M6 10.5 H27.0" stroke="#8a8a8a" stroke-width="0.9" stroke-dasharray="3.6 0.5 2.2 0.5 2.8 0.5" opacity="0.62"/><path d="M6 12.5 H31.0" stroke="#8a8a8a" stroke-width="0.9" stroke-dasharray="3 0.5 4.2 0.5 2 0.5" opacity="0.62"/><path d="M6 14.5 H30.0" stroke="#8a8a8a" stroke-width="0.9" stroke-dasharray="2.6 0.5 3.4 0.5 1.8 0.5" opacity="0.62"/><path d="M6 16.5 H14.0" stroke="#8a8a8a" stroke-width="0.9" stroke-dasharray="3.6 0.5 2.2 0.5 2.8 0.5" opacity="0.62"/><path d="M6 20.5 H31.0" stroke="#8a8a8a" stroke-width="0.9" stroke-dasharray="3 0.5 4.2 0.5 2 0.5" opacity="0.62"/><path d="M6 22.5 H30.0" stroke="#8a8a8a" stroke-width="0.9" stroke-dasharray="2.6 0.5 3.4 0.5 1.8 0.5" opacity="0.62"/><path d="M6 24.5 H28.0" stroke="#8a8a8a" stroke-width="0.9" stroke-dasharray="3.6 0.5 2.2 0.5 2.8 0.5" opacity="0.62"/><path d="M6 26.5 H30.0" stroke="#8a8a8a" stroke-width="0.9" stroke-dasharray="3 0.5 4.2 0.5 2 0.5" opacity="0.62"/><path d="M6 28.5 H27.0" stroke="#8a8a8a" stroke-width="0.9" stroke-dasharray="2.6 0.5 3.4 0.5 1.8 0.5" opacity="0.62"/><path d="M6 32.5 H31.0" stroke="#8a8a8a" stroke-width="0.9" stroke-dasharray="3.6 0.5 2.2 0.5 2.8 0.5" opacity="0.62"/><path d="M6 34.5 H27.0" stroke="#8a8a8a" stroke-width="0.9" stroke-dasharray="3 0.5 4.2 0.5 2 0.5" opacity="0.62"/><path d="M6 36.5 H29.0" stroke="#8a8a8a" stroke-width="0.9" stroke-dasharray="2.6 0.5 3.4 0.5 1.8 0.5" opacity="0.62"/><path d="M6 38.5 H23.0" stroke="#8a8a8a" stroke-width="0.9" stroke-dasharray="3.6 0.5 2.2 0.5 2.8 0.5" opacity="0.62"/></svg>
<div class="lbl" style="left:927.80px;top:337px;letter-spacing:0.00px">Kconfig</div>
<svg style="left:1061px;top:288px" width="38" height="47" viewBox="0 0 38 47"><path d="M1.5 1 H26 L36.5 10.5 V45 H1.5 Z" fill="#000" opacity="0.10" transform="translate(0,1)"/><path d="M1.5 0.5 H26 L36.5 10 V44.5 H1.5 Z" fill="url(#pg)" stroke="#a9a9a9" stroke-width="1"/><path d="M26 0.5 C27 4 27 7 25.6 9.6 C29 8.6 33 9 36.5 10 Z" fill="url(#cg)" stroke="#b4b4b4" stroke-width="0.6"/><text x="6.2" y="11.4" font-family="Liberation Sans, sans-serif" font-weight="bold" font-size="7.2" fill="#6f6f6f">1</text><text x="6.2" y="20.5" font-family="Liberation Sans, sans-serif" font-weight="bold" font-size="7.2" fill="#6f6f6f">10</text><text x="6.2" y="29.6" font-family="Liberation Sans, sans-serif" font-weight="bold" font-size="7.2" fill="#6f6f6f">101</text><text x="6.2" y="38.7" font-family="Liberation Sans, sans-serif" font-weight="bold" font-size="7.2" fill="#6f6f6f">1010</text></svg>
<div class="lbl" style="left:1020.90px;top:337px;letter-spacing:0.20px">load.imx</div>
<svg style="left:317px;top:396px" width="38" height="47" viewBox="0 0 38 47"><path d="M1.5 1 H26 L36.5 10.5 V45 H1.5 Z" fill="#000" opacity="0.10" transform="translate(0,1)"/><path d="M1.5 0.5 H26 L36.5 10 V44.5 H1.5 Z" fill="url(#pg)" stroke="#a9a9a9" stroke-width="1"/><path d="M26 0.5 C27 4 27 7 25.6 9.6 C29 8.6 33 9 36.5 10 Z" fill="url(#cg)" stroke="#b4b4b4" stroke-width="0.6"/><path d="M6 8.5 H26.0" stroke="#8a8a8a" stroke-width="0.9" stroke-dasharray="2.6 0.5 3.4 0.5 1.8 0.5" opacity="0.62"/><path d="M6 10.5 H27.0" stroke="#8a8a8a" stroke-width="0.9" stroke-dasharray="3.6 0.5 2.2 0.5 2.8 0.5" opacity="0.62"/><path d="M6 12.5 H31.0" stroke="#8a8a8a" stroke-width="0.9" stroke-dasharray="3 0.5 4.2 0.5 2 0.5" opacity="0.62"/><path d="M6 14.5 H30.0" stroke="#8a8a8a" stroke-width="0.9" stroke-dasharray="2.6 0.5 3.4 0.5 1.8 0.5" opacity="0.62"/><path d="M6 16.5 H14.0" stroke="#8a8a8a" stroke-width="0.9" stroke-dasharray="3.6 0.5 2.2 0.5 2.8 0.5" opacity="0.62"/><path d="M6 20.5 H31.0" stroke="#8a8a8a" stroke-width="0.9" stroke-dasharray="3 0.5 4.2 0.5 2 0.5" opacity="0.62"/><path d="M6 22.5 H30.0" stroke="#8a8a8a" stroke-width="0.9" stroke-dasharray="2.6 0.5 3.4 0.5 1.8 0.5" opacity="0.62"/><path d="M6 24.5 H28.0" stroke="#8a8a8a" stroke-width="0.9" stroke-dasharray="3.6 0.5 2.2 0.5 2.8 0.5" opacity="0.62"/><path d="M6 26.5 H30.0" stroke="#8a8a8a" stroke-width="0.9" stroke-dasharray="3 0.5 4.2 0.5 2 0.5" opacity="0.62"/><path d="M6 28.5 H27.0" stroke="#8a8a8a" stroke-width="0.9" stroke-dasharray="2.6 0.5 3.4 0.5 1.8 0.5" opacity="0.62"/><path d="M6 32.5 H31.0" stroke="#8a8a8a" stroke-width="0.9" stroke-dasharray="3.6 0.5 2.2 0.5 2.8 0.5" opacity="0.62"/><path d="M6 34.5 H27.0" stroke="#8a8a8a" stroke-width="0.9" stroke-dasharray="3 0.5 4.2 0.5 2 0.5" opacity="0.62"/><path d="M6 36.5 H29.0" stroke="#8a8a8a" stroke-width="0.9" stroke-dasharray="2.6 0.5 3.4 0.5 1.8 0.5" opacity="0.62"/><path d="M6 38.5 H23.0" stroke="#8a8a8a" stroke-width="0.9" stroke-dasharray="3.6 0.5 2.2 0.5 2.8 0.5" opacity="0.62"/></svg>
<div class="lbl" style="left:276.70px;top:445px;letter-spacing:-0.20px">MAINTAINE<br>RS</div>
<svg style="left:410px;top:396px" width="38" height="47" viewBox="0 0 38 47"><path d="M1.5 1 H26 L36.5 10.5 V45 H1.5 Z" fill="#000" opacity="0.10" transform="translate(0,1)"/><path d="M1.5 0.5 H26 L36.5 10 V44.5 H1.5 Z" fill="url(#pg)" stroke="#a9a9a9" stroke-width="1"/><path d="M26 0.5 C27 4 27 7 25.6 9.6 C29 8.6 33 9 36.5 10 Z" fill="url(#cg)" stroke="#b4b4b4" stroke-width="0.6"/><path d="M6.0 6.5 H22.0" stroke="#5b8db3" stroke-width="0.95" stroke-dasharray="2.6 0.5 3.4 0.5" opacity="0.9"/><path d="M6.0 8.5 H24.0" stroke="#5b8db3" stroke-width="0.95" stroke-dasharray="2.6 0.5 3.4 0.5" opacity="0.9"/><path d="M6.0 10.5 H15.0" stroke="#5b8db3" stroke-width="0.95" stroke-dasharray="2.6 0.5 3.4 0.5" opacity="0.9"/><path d="M6.0 12.5 H13.0" stroke="#5b8db3" stroke-width="0.95" stroke-dasharray="2.6 0.5 3.4 0.5" opacity="0.9"/><path d="M6.0 15.5 H9.0" stroke="#a868d6" stroke-width="0.95" stroke-dasharray="2.6 0.5 3.4 0.5" opacity="0.9"/><path d="M9.6 15.5 H15.0" stroke="#c55fa6" stroke-width="0.95" stroke-dasharray="2.6 0.5 3.4 0.5" opacity="0.9"/><path d="M6.0 17.5 H9.0" stroke="#a868d6" stroke-width="0.95" stroke-dasharray="2.6 0.5 3.4 0.5" opacity="0.9"/><path d="M9.6 17.5 H14.2" stroke="#c55fa6" stroke-width="0.95" stroke-dasharray="2.6 0.5 3.4 0.5" opacity="0.9"/><path d="M14.8 17.5 H22.8" stroke="#5b8db3" stroke-width="0.95" stroke-dasharray="2.6 0.5 3.4 0.5" opacity="0.9"/><path d="M6.0 20.5 H8.2" stroke="#62cc5e" stroke-width="0.95" stroke-dasharray="2.6 0.5 3.4 0.5" opacity="0.9"/><path d="M8.6 20.5 H11.0" stroke="#9a9a9a" stroke-width="0.95" stroke-dasharray="2.6 0.5 3.4 0.5" opacity="0.9"/><path d="M6.0 22.5 H7.0" stroke="#9a9a9a" stroke-width="0.95" stroke-dasharray="2.6 0.5 3.4 0.5" opacity="0.9"/><path d="M6.0 24.5 H8.8" stroke="#62cc5e" stroke-width="0.95" stroke-dasharray="2.6 0.5 3.4 0.5" opacity="0.9"/><path d="M9.0 24.5 H11.0" stroke="#9a9a9a" stroke-width="0.95" stroke-dasharray="2.6 0.5 3.4 0.5" opacity="0.9"/><path d="M15.0 24.5 H22.0" stroke="#5b8db3" stroke-width="0.95" stroke-dasharray="2.6 0.5 3.4 0.5" opacity="0.9"/><path d="M6.0 26.5 H9.0" stroke="#62cc5e" stroke-width="0.95" stroke-dasharray="2.6 0.5 3.4 0.5" opacity="0.9"/><path d="M9.2 26.5 H12.0" stroke="#9a9a9a" stroke-width="0.95" stroke-dasharray="2.6 0.5 3.4 0.5" opacity="0.9"/><path d="M15.0 26.5 H26.0" stroke="#5b8db3" stroke-width="0.95" stroke-dasharray="2.6 0.5 3.4 0.5" opacity="0.9"/><path d="M6.0 28.5 H8.4" stroke="#62cc5e" stroke-width="0.95" stroke-dasharray="2.6 0.5 3.4 0.5" opacity="0.9"/><path d="M8.8 28.5 H11.0" stroke="#9a9a9a" stroke-width="0.95" stroke-dasharray="2.6 0.5 3.4 0.5" opacity="0.9"/><path d="M15.0 28.5 H25.4" stroke="#5b8db3" stroke-width="0.95" stroke-dasharray="2.6 0.5 3.4 0.5" opacity="0.9"/><path d="M6.0 30.5 H8.2" stroke="#62cc5e" stroke-width="0.95" stroke-dasharray="2.6 0.5 3.4 0.5" opacity="0.9"/><path d="M8.6 30.5 H11.0" stroke="#9a9a9a" stroke-width="0.95" stroke-dasharray="2.6 0.5 3.4 0.5" opacity="0.9"/><path d="M15.0 30.5 H27.0" stroke="#5b8db3" stroke-width="0.95" stroke-dasharray="2.6 0.5 3.4 0.5" opacity="0.9"/><path d="M6.0 33.5 H10.2" stroke="#9a9a9a" stroke-width="0.95" stroke-dasharray="2.6 0.5 3.4 0.5" opacity="0.9"/><path d="M10.6 33.5 H30.0" stroke="#c55fa6" stroke-width="0.95" stroke-dasharray="2.6 0.5 3.4 0.5" opacity="0.9"/><path d="M6.0 35.5 H11.6" stroke="#9a9a9a" stroke-width="0.95" stroke-dasharray="2.6 0.5 3.4 0.5" opacity="0.9"/><path d="M12.0 35.5 H27.0" stroke="#c55fa6" stroke-width="0.95" stroke-dasharray="2.6 0.5 3.4 0.5" opacity="0.9"/><path d="M6.0 37.5 H9.0" stroke="#d84545" stroke-width="0.95" stroke-dasharray="2.6 0.5 3.4 0.5" opacity="0.9"/><path d="M9.4 37.5 H13.0" stroke="#9a9a9a" stroke-width="0.95" stroke-dasharray="2.6 0.5 3.4 0.5" opacity="0.9"/><path d="M15.0 37.5 H31.0" stroke="#5b8db3" stroke-width="0.95" stroke-dasharray="2.6 0.5 3.4 0.5" opacity="0.9"/></svg>
<div class="lbl" style="left:369.55px;top:445px;letter-spacing:-0.50px">MAKEALL</div>
<svg style="left:503px;top:396px" width="38" height="47" viewBox="0 0 38 47"><path d="M1.5 1 H26 L36.5 10.5 V45 H1.5 Z" fill="#000" opacity="0.10" transform="translate(0,1)"/><path d="M1.5 0.5 H26 L36.5 10 V44.5 H1.5 Z" fill="url(#pg)" stroke="#a9a9a9" stroke-width="1"/><path d="M26 0.5 C27 4 27 7 25.6 9.6 C29 8.6 33 9 36.5 10 Z" fill="url(#cg)" stroke="#b4b4b4" stroke-width="0.6"/><path d="M6 8.5 H26.0" stroke="#8a8a8a" stroke-width="0.9" stroke-dasharray="2.6 0.5 3.4 0.5 1.8 0.5" opacity="0.62"/><path d="M6 10.5 H27.0" stroke="#8a8a8a" stroke-width="0.9" stroke-dasharray="3.6 0.5 2.2 0.5 2.8 0.5" opacity="0.62"/><path d="M6 12.5 H31.0" stroke="#8a8a8a" stroke-width="0.9" stroke-dasharray="3 0.5 4.2 0.5 2 0.5" opacity="0.62"/><path d="M6 14.5 H30.0" stroke="#8a8a8a" stroke-width="0.9" stroke-dasharray="2.6 0.5 3.4 0.5 1.8 0.5" opacity="0.62"/><path d="M6 16.5 H14.0" stroke="#8a8a8a" stroke-width="0.9" stroke-dasharray="3.6 0.5 2.2 0.5 2.8 0.5" opacity="0.62"/><path d="M6 20.5 H31.0" stroke="#8a8a8a" stroke-width="0.9" stroke-dasharray="3 0.5 4.2 0.5 2 0.5" opacity="0.62"/><path d="M6 22.5 H30.0" stroke="#8a8a8a" stroke-width="0.9" stroke-dasharray="2.6 0.5 3.4 0.5 1.8 0.5" opacity="0.62"/><path d="M6 24.5 H28.0" stroke="#8a8a8a" stroke-width="0.9" stroke-dasharray="3.6 0.5 2.2 0.5 2.8 0.5" opacity="0.62"/><path d="M6 26.5 H30.0" stroke="#8a8a8a" stroke-width="0.9" stroke-dasharray="3 0.5 4.2 0.5 2 0.5" opacity="0.62"/><path d="M6 28.5 H27.0" stroke="#8a8a8a" stroke-width="0.9" stroke-dasharray="2.6 0.5 3.4 0.5 1.8 0.5" opacity="0.62"/><path d="M6 32.5 H31.0" stroke="#8a8a8a" stroke-width="0.9" stroke-dasharray="3.6 0.5 2.2 0.5 2.8 0.5" opacity="0.62"/><path d="M6 34.5 H27.0" stroke="#8a8a8a" stroke-width="0.9" stroke-dasharray="3 0.5 4.2 0.5 2 0.5" opacity="0.62"/><path d="M6 36.5 H29.0" stroke="#8a8a8a" stroke-width="0.9" stroke-dasharray="2.6 0.5 3.4 0.5 1.8 0.5" opacity="0.62"/><path d="M6 38.5 H23.0" stroke="#8a8a8a" stroke-width="0.9" stroke-dasharray="3.6 0.5 2.2 0.5 2.8 0.5" opacity="0.62"/></svg>
<div class="lbl" style="left:462.90px;top:445px;letter-spacing:0.20px">Makefile</div>
<svg style="left:596px;top:396px" width="38" height="47" viewBox="0 0 38 47"><path d="M1.5 1 H26 L36.5 10.5 V45 H1.5 Z" fill="#000" opacity="0.10" transform="translate(0,1)"/><path d="M1.5 0.5 H26 L36.5 10 V44.5 H1.5 Z" fill="url(#pg)" stroke="#a9a9a9" stroke-width="1"/><path d="M26 0.5 C27 4 27 7 25.6 9.6 C29 8.6 33 9 36.5 10 Z" fill="url(#cg)" stroke="#b4b4b4" stroke-width="0.6"/><path d="M6 8.5 H26.0" stroke="#8a8a8a" stroke-width="0.9" stroke-dasharray="2.6 0.5 3.4 0.5 1.8 0.5" opacity="0.62"/><path d="M6 10.5 H27.0" stroke="#8a8a8a" stroke-width="0.9" stroke-dasharray="3.6 0.5 2.2 0.5 2.8 0.5" opacity="0.62"/><path d="M6 12.5 H31.0" stroke="#8a8a8a" stroke-width="0.9" stroke-dasharray="3 0.5 4.2 0.5 2 0.5" opacity="0.62"/><path d="M6 14.5 H30.0" stroke="#8a8a8a" stroke-width="0.9" stroke-dasharray="2.6 0.5 3.4 0.5 1.8 0.5" opacity="0.62"/><path d="M6 16.5 H14.0" stroke="#8a8a8a" stroke-width="0.9" stroke-dasharray="3.6 0.5 2.2 0.5 2.8 0.5" opacity="0.62"/><path d="M6 20.5 H31.0" stroke="#8a8a8a" stroke-width="0.9" stroke-dasharray="3 0.5 4.2 0.5 2 0.5" opacity="0.62"/><path d="M6 22.5 H30.0" stroke="#8a8a8a" stroke-width="0.9" stroke-dasharray="2.6 0.5 3.4 0.5 1.8 0.5" opacity="0.62"/><path d="M6 24.5 H28.0" stroke="#8a8a8a" stroke-width="0.9" stroke-dasharray="3.6 0.5 2.2 0.5 2.8 0.5" opacity="0.62"/><path d="M6 26.5 H30.0" stroke="#8a8a8a" stroke-width="0.9" stroke-dasharray="3 0.5 4.2 0.5 2 0.5" opacity="0.62"/><path d="M6 28.5 H27.0" stroke="#8a8a8a" stroke-width="0.9" stroke-dasharray="2.6 0.5 3.4 0.5 1.8 0.5" opacity="0.62"/><path d="M6 32.5 H31.0" stroke="#8a8a8a" stroke-width="0.9" stroke-dasharray="3.6 0.5 2.2 0.5 2.8 0.5" opacity="0.62"/><path d="M6 34.5 H27.0" stroke="#8a8a8a" stroke-width="0.9" stroke-dasharray="3 0.5 4.2 0.5 2 0.5" opacity="0.62"/><path d="M6 36.5 H29.0" stroke="#8a8a8a" stroke-width="0.9" stroke-dasharray="2.6 0.5 3.4 0.5 1.8 0.5" opacity="0.62"/><path d="M6 38.5 H23.0" stroke="#8a8a8a" stroke-width="0.9" stroke-dasharray="3.6 0.5 2.2 0.5 2.8 0.5" opacity="0.62"/></svg>
<div class="lbl" style="left:555.30px;top:445px;letter-spacing:-1.00px">README</div>
<svg style="left:689px;top:396px" width="38" height="47" viewBox="0 0 38 47"><path d="M1.5 1 H26 L36.5 10.5 V45 H1.5 Z" fill="#000" opacity="0.10" transform="translate(0,1)"/><path d="M1.5 0.5 H26 L36.5 10 V44.5 H1.5 Z" fill="url(#pg)" stroke="#a9a9a9" stroke-width="1"/><path d="M26 0.5 C27 4 27 7 25.6 9.6 C29 8.6 33 9 36.5 10 Z" fill="url(#cg)" stroke="#b4b4b4" stroke-width="0.6"/><path d="M6 8.5 H26.0" stroke="#8a8a8a" stroke-width="0.9" stroke-dasharray="2.6 0.5 3.4 0.5 1.8 0.5" opacity="0.62"/><path d="M6 10.5 H27.0" stroke="#8a8a8a" stroke-width="0.9" stroke-dasharray="3.6 0.5 2.2 0.5 2.8 0.5" opacity="0.62"/><path d="M6 12.5 H31.0" stroke="#8a8a8a" stroke-width="0.9" stroke-dasharray="3 0.5 4.2 0.5 2 0.5" opacity="0.62"/><path d="M6 14.5 H30.0" stroke="#8a8a8a" stroke-width="0.9" stroke-dasharray="2.6 0.5 3.4 0.5 1.8 0.5" opacity="0.62"/><path d="M6 16.5 H14.0" stroke="#8a8a8a" stroke-width="0.9" stroke-dasharray="3.6 0.5 2.2 0.5 2.8 0.5" opacity="0.62"/><path d="M6 20.5 H31.0" stroke="#8a8a8a" stroke-width="0.9" stroke-dasharray="3 0.5 4.2 0.5 2 0.5" opacity="0.62"/><path d="M6 22.5 H30.0" stroke="#8a8a8a" stroke-width="0.9" stroke-dasharray="2.6 0.5 3.4 0.5 1.8 0.5" opacity="0.62"/><path d="M6 24.5 H28.0" stroke="#8a8a8a" stroke-width="0.9" stroke-dasharray="3.6 0.5 2.2 0.5 2.8 0.5" opacity="0.62"/><path d="M6 26.5 H30.0" stroke="#8a8a8a" stroke-width="0.9" stroke-dasharray="3 0.5 4.2 0.5 2 0.5" opacity="0.62"/><path d="M6 28.5 H27.0" stroke="#8a8a8a" stroke-width="0.9" stroke-dasharray="2.6 0.5 3.4 0.5 1.8 0.5" opacity="0.62"/><path d="M6 32.5 H31.0" stroke="#8a8a8a" stroke-width="0.9" stroke-dasharray="3.6 0.5 2.2 0.5 2.8 0.5" opacity="0.62"/><path d="M6 34.5 H27.0" stroke="#8a8a8a" stroke-width="0.9" stroke-dasharray="3 0.5 4.2 0.5 2 0.5" opacity="0.62"/><path d="M6 36.5 H29.0" stroke="#8a8a8a" stroke-width="0.9" stroke-dasharray="2.6 0.5 3.4 0.5 1.8 0.5" opacity="0.62"/><path d="M6 38.5 H23.0" stroke="#8a8a8a" stroke-width="0.9" stroke-dasharray="3.6 0.5 2.2 0.5 2.8 0.5" opacity="0.62"/></svg>
<div class="lbl" style="left:648.90px;top:445px;letter-spacing:0.20px">snapshot.<br>commit</div>
<svg style="left:782px;top:396px" width="38" height="47" viewBox="0 0 38 47"><path d="M1.5 1 H26 L36.5 10.5 V45 H1.5 Z" fill="#000" opacity="0.10" transform="translate(0,1)"/><path d="M1.5 0.5 H26 L36.5 10 V44.5 H1.5 Z" fill="url(#pg)" stroke="#a9a9a9" stroke-width="1"/><path d="M26 0.5 C27 4 27 7 25.6 9.6 C29 8.6 33 9 36.5 10 Z" fill="url(#cg)" stroke="#b4b4b4" stroke-width="0.6"/><path d="M6 8.5 H26.0" stroke="#8a8a8a" stroke-width="0.9" stroke-dasharray="2.6 0.5 3.4 0.5 1.8 0.5" opacity="0.62"/><path d="M6 10.5 H27.0" stroke="#8a8a8a" stroke-width="0.9" stroke-dasharray="3.6 0.5 2.2 0.5 2.8 0.5" opacity="0.62"/><path d="M6 12.5 H31.0" stroke="#8a8a8a" stroke-width="0.9" stroke-dasharray="3 0.5 4.2 0.5 2 0.5" opacity="0.62"/><path d="M6 14.5 H30.0" stroke="#8a8a8a" stroke-width="0.9" stroke-dasharray="2.6 0.5 3.4 0.5 1.8 0.5" opacity="0.62"/><path d="M6 16.5 H14.0" stroke="#8a8a8a" stroke-width="0.9" stroke-dasharray="3.6 0.5 2.2 0.5 2.8 0.5" opacity="0.62"/><path d="M6 20.5 H31.0" stroke="#8a8a8a" stroke-width="0.9" stroke-dasharray="3 0.5 4.2 0.5 2 0.5" opacity="0.62"/><path d="M6 22.5 H30.0" stroke="#8a8a8a" stroke-width="0.9" stroke-dasharray="2.6 0.5 3.4 0.5 1.8 0.5" opacity="0.62"/><path d="M6 24.5 H28.0" stroke="#8a8a8a" stroke-width="0.9" stroke-dasharray="3.6 0.5 2.2 0.5 2.8 0.5" opacity="0.62"/><path d="M6 26.5 H30.0" stroke="#8a8a8a" stroke-width="0.9" stroke-dasharray="3 0.5 4.2 0.5 2 0.5" opacity="0.62"/><path d="M6 28.5 H27.0" stroke="#8a8a8a" stroke-width="0.9" stroke-dasharray="2.6 0.5 3.4 0.5 1.8 0.5" opacity="0.62"/><path d="M6 32.5 H31.0" stroke="#8a8a8a" stroke-width="0.9" stroke-dasharray="3.6 0.5 2.2 0.5 2.8 0.5" opacity="0.62"/><path d="M6 34.5 H27.0" stroke="#8a8a8a" stroke-width="0.9" stroke-dasharray="3 0.5 4.2 0.5 2 0.5" opacity="0.62"/><path d="M6 36.5 H29.0" stroke="#8a8a8a" stroke-width="0.9" stroke-dasharray="2.6 0.5 3.4 0.5 1.8 0.5" opacity="0.62"/><path d="M6 38.5 H23.0" stroke="#8a8a8a" stroke-width="0.9" stroke-dasharray="3.6 0.5 2.2 0.5 2.8 0.5" opacity="0.62"/></svg>
<div class="lbl" style="left:741.75px;top:445px;letter-spacing:-0.10px">System.<br>map</div>
<svg style="left:875px;top:396px" width="38" height="47" viewBox="0 0 38 47"><path d="M1.5 1 H26 L36.5 10.5 V45 H1.5 Z" fill="#000" opacity="0.10" transform="translate(0,1)"/><path d="M1.5 0.5 H26 L36.5 10 V44.5 H1.5 Z" fill="url(#pg)" stroke="#a9a9a9" stroke-width="1"/><path d="M26 0.5 C27 4 27 7 25.6 9.6 C29 8.6 33 9 36.5 10 Z" fill="url(#cg)" stroke="#b4b4b4" stroke-width="0.6"/><path d="M6 8.5 H26.0" stroke="#8a8a8a" stroke-width="0.9" stroke-dasharray="2.6 0.5 3.4 0.5 1.8 0.5" opacity="0.62"/><path d="M6 10.5 H27.0" stroke="#8a8a8a" stroke-width="0.9" stroke-dasharray="3.6 0.5 2.2 0.5 2.8 0.5" opacity="0.62"/><path d="M6 12.5 H31.0" stroke="#8a8a8a" stroke-width="0.9" stroke-dasharray="3 0.5 4.2 0.5 2 0.5" opacity="0.62"/><path d="M6 14.5 H30.0" stroke="#8a8a8a" stroke-width="0.9" stroke-dasharray="2.6 0.5 3.4 0.5 1.8 0.5" opacity="0.62"/><path d="M6 16.5 H14.0" stroke="#8a8a8a" stroke-width="0.9" stroke-dasharray="3.6 0.5 2.2 0.5 2.8 0.5" opacity="0.62"/><path d="M6 20.5 H31.0" stroke="#8a8a8a" stroke-width="0.9" stroke-dasharray="3 0.5 4.2 0.5 2 0.5" opacity="0.62"/><path d="M6 22.5 H30.0" stroke="#8a8a8a" stroke-width="0.9" stroke-dasharray="2.6 0.5 3.4 0.5 1.8 0.5" opacity="0.62"/><path d="M6 24.5 H28.0" stroke="#8a8a8a" stroke-width="0.9" stroke-dasharray="3.6 0.5 2.2 0.5 2.8 0.5" opacity="0.62"/><path d="M6 26.5 H30.0" stroke="#8a8a8a" stroke-width="0.9" stroke-dasharray="3 0.5 4.2 0.5 2 0.5" opacity="0.62"/><path d="M6 28.5 H27.0" stroke="#8a8a8a" stroke-width="0.9" stroke-dasharray="2.6 0.5 3.4 0.5 1.8 0.5" opacity="0.62"/><path d="M6 32.5 H31.0" stroke="#8a8a8a" stroke-width="0.9" stroke-dasharray="3.6 0.5 2.2 0.5 2.8 0.5" opacity="0.62"/><path d="M6 34.5 H27.0" stroke="#8a8a8a" stroke-width="0.9" stroke-dasharray="3 0.5 4.2 0.5 2 0.5" opacity="0.62"/><path d="M6 36.5 H29.0" stroke="#8a8a8a" stroke-width="0.9" stroke-dasharray="2.6 0.5 3.4 0.5 1.8 0.5" opacity="0.62"/><path d="M6 38.5 H23.0" stroke="#8a8a8a" stroke-width="0.9" stroke-dasharray="3.6 0.5 2.2 0.5 2.8 0.5" opacity="0.62"/></svg>
<div class="lbl" style="left:834.98px;top:445px;letter-spacing:0.37px">u-boot</div>
<svg style="left:968px;top:396px" width="38" height="47" viewBox="0 0 38 47"><path d="M1.5 1 H26 L36.5 10.5 V45 H1.5 Z" fill="#000" opacity="0.10" transform="translate(0,1)"/><path d="M1.5 0.5 H26 L36.5 10 V44.5 H1.5 Z" fill="url(#pg)" stroke="#a9a9a9" stroke-width="1"/><path d="M26 0.5 C27 4 27 7 25.6 9.6 C29 8.6 33 9 36.5 10 Z" fill="url(#cg)" stroke="#b4b4b4" stroke-width="0.6"/><text x="6.2" y="11.4" font-family="Liberation Sans, sans-serif" font-weight="bold" font-size="7.2" fill="#6f6f6f">1</text><text x="6.2" y="20.5" font-family="Liberation Sans, sans-serif" font-weight="bold" font-size="7.2" fill="#6f6f6f">10</text><text x="6.2" y="29.6" font-family="Liberation Sans, sans-serif" font-weight="bold" font-size="7.2" fill="#6f6f6f">101</text><text x="6.2" y="38.7" font-family="Liberation Sans, sans-serif" font-weight="bold" font-size="7.2" fill="#6f6f6f">1010</text></svg>
<div class="lbl" style="left:927.98px;top:445px;letter-spacing:0.37px">u-boot.bin</div>
<svg style="left:1061px;top:396px" width="38" height="47" viewBox="0 0 38 47"><path d="M1.5 1 H26 L36.5 10.5 V45 H1.5 Z" fill="#000" opacity="0.10" transform="translate(0,1)"/><path d="M1.5 0.5 H26 L36.5 10 V44.5 H1.5 Z" fill="url(#pg)" stroke="#a9a9a9" stroke-width="1"/><path d="M26 0.5 C27 4 27 7 25.6 9.6 C29 8.6 33 9 36.5 10 Z" fill="url(#cg)" stroke="#b4b4b4" stroke-width="0.6"/><path d="M6 8.5 H26.0" stroke="#8a8a8a" stroke-width="0.9" stroke-dasharray="2.6 0.5 3.4 0.5 1.8 0.5" opacity="0.62"/><path d="M6 10.5 H27.0" stroke="#8a8a8a" stroke-width="0.9" stroke-dasharray="3.6 0.5 2.2 0.5 2.8 0.5" opacity="0.62"/><path d="M6 12.5 H31.0" stroke="#8a8a8a" stroke-width="0.9" stroke-dasharray="3 0.5 4.2 0.5 2 0.5" opacity="0.62"/><path d="M6 14.5 H30.0" stroke="#8a8a8a" stroke-width="0.9" stroke-dasharray="2.6 0.5 3.4 0.5 1.8 0.5" opacity="0.62"/><path d="M6 16.5 H14.0" stroke="#8a8a8a" stroke-width="0.9" stroke-dasharray="3.6 0.5 2.2 0.5 2.8 0.5" opacity="0.62"/><path d="M6 20.5 H31.0" stroke="#8a8a8a" stroke-width="0.9" stroke-dasharray="3 0.5 4.2 0.5 2 0.5" opacity="0.62"/><path d="M6 22.5 H30.0" stroke="#8a8a8a" stroke-width="0.9" stroke-dasharray="2.6 0.5 3.4 0.5 1.8 0.5" opacity="0.62"/><path d="M6 24.5 H28.0" stroke="#8a8a8a" stroke-width="0.9" stroke-dasharray="3.6 0.5 2.2 0.5 2.8 0.5" opacity="0.62"/><path d="M6 26.5 H30.0" stroke="#8a8a8a" stroke-width="0.9" stroke-dasharray="3 0.5 4.2 0.5 2 0.5" opacity="0.62"/><path d="M6 28.5 H27.0" stroke="#8a8a8a" stroke-width="0.9" stroke-dasharray="2.6 0.5 3.4 0.5 1.8 0.5" opacity="0.62"/><path d="M6 32.5 H31.0" stroke="#8a8a8a" stroke-width="0.9" stroke-dasharray="3.6 0.5 2.2 0.5 2.8 0.5" opacity="0.62"/><path d="M6 34.5 H27.0" stroke="#8a8a8a" stroke-width="0.9" stroke-dasharray="3 0.5 4.2 0.5 2 0.5" opacity="0.62"/><path d="M6 36.5 H29.0" stroke="#8a8a8a" stroke-width="0.9" stroke-dasharray="2.6 0.5 3.4 0.5 1.8 0.5" opacity="0.62"/><path d="M6 38.5 H23.0" stroke="#8a8a8a" stroke-width="0.9" stroke-dasharray="3.6 0.5 2.2 0.5 2.8 0.5" opacity="0.62"/></svg>
<div class="lbl" style="left:1020.98px;top:445px;letter-spacing:0.37px">u-boot.cfg</div>
<svg style="left:317px;top:488px" width="38" height="47" viewBox="0 0 38 47"><path d="M1.5 1 H26 L36.5 10.5 V45 H1.5 Z" fill="#000" opacity="0.10" transform="translate(0,1)"/><path d="M1.5 0.5 H26 L36.5 10 V44.5 H1.5 Z" fill="url(#pg)" stroke="#a9a9a9" stroke-width="1"/><path d="M26 0.5 C27 4 27 7 25.6 9.6 C29 8.6 33 9 36.5 10 Z" fill="url(#cg)" stroke="#b4b4b4" stroke-width="0.6"/><text x="6.2" y="11.4" font-family="Liberation Sans, sans-serif" font-weight="bold" font-size="7.2" fill="#6f6f6f">1</text><text x="6.2" y="20.5" font-family="Liberation Sans, sans-serif" font-weight="bold" font-size="7.2" fill="#6f6f6f">10</text><text x="6.2" y="29.6" font-family="Liberation Sans, sans-serif" font-weight="bold" font-size="7.2" fill="#6f6f6f">101</text><text x="6.2" y="38.7" font-family="Liberation Sans, sans-serif" font-weight="bold" font-size="7.2" fill="#6f6f6f">1010</text></svg>
<div class="lbl" style="left:276.99px;top:537px;letter-spacing:0.37px">u-boot.imx</div>
<svg style="left:410px;top:488px" width="38" height="47" viewBox="0 0 38 47"><path d="M1.5 1 H26 L36.5 10.5 V45 H1.5 Z" fill="#000" opacity="0.10" transform="translate(0,1)"/><path d="M1.5 0.5 H26 L36.5 10 V44.5 H1.5 Z" fill="url(#pg)" stroke="#a9a9a9" stroke-width="1"/><path d="M26 0.5 C27 4 27 7 25.6 9.6 C29 8.6 33 9 36.5 10 Z" fill="url(#cg)" stroke="#b4b4b4" stroke-width="0.6"/><path d="M6 8.5 H26.0" stroke="#8a8a8a" stroke-width="0.9" stroke-dasharray="2.6 0.5 3.4 0.5 1.8 0.5" opacity="0.62"/><path d="M6 10.5 H27.0" stroke="#8a8a8a" stroke-width="0.9" stroke-dasharray="3.6 0.5 2.2 0.5 2.8 0.5" opacity="0.62"/><path d="M6 12.5 H31.0" stroke="#8a8a8a" stroke-width="0.9" stroke-dasharray="3 0.5 4.2 0.5 2 0.5" opacity="0.62"/><path d="M6 14.5 H30.0" stroke="#8a8a8a" stroke-width="0.9" stroke-dasharray="2.6 0.5 3.4 0.5 1.8 0.5" opacity="0.62"/><path d="M6 16.5 H14.0" stroke="#8a8a8a" stroke-width="0.9" stroke-dasharray="3.6 0.5 2.2 0.5 2.8 0.5" opacity="0.62"/><path d="M6 20.5 H31.0" stroke="#8a8a8a" stroke-width="0.9" stroke-dasharray="3 0.5 4.2 0.5 2 0.5" opacity="0.62"/><path d="M6 22.5 H30.0" stroke="#8a8a8a" stroke-width="0.9" stroke-dasharray="2.6 0.5 3.4 0.5 1.8 0.5" opacity="0.62"/><path d="M6 24.5 H28.0" stroke="#8a8a8a" stroke-width="0.9" stroke-dasharray="3.6 0.5 2.2 0.5 2.8 0.5" opacity="0.62"/><path d="M6 26.5 H30.0" stroke="#8a8a8a" stroke-width="0.9" stroke-dasharray="3 0.5 4.2 0.5 2 0.5" opacity="0.62"/><path d="M6 28.5 H27.0" stroke="#8a8a8a" stroke-width="0.9" stroke-dasharray="2.6 0.5 3.4 0.5 1.8 0.5" opacity="0.62"/><path d="M6 32.5 H31.0" stroke="#8a8a8a" stroke-width="0.9" stroke-dasharray="3.6 0.5 2.2 0.5 2.8 0.5" opacity="0.62"/><path d="M6 34.5 H27.0" stroke="#8a8a8a" stroke-width="0.9" stroke-dasharray="3 0.5 4.2 0.5 2 0.5" opacity="0.62"/><path d="M6 36.5 H29.0" stroke="#8a8a8a" stroke-width="0.9" stroke-dasharray="2.6 0.5 3.4 0.5 1.8 0.5" opacity="0.62"/><path d="M6 38.5 H23.0" stroke="#8a8a8a" stroke-width="0.9" stroke-dasharray="3.6 0.5 2.2 0.5 2.8 0.5" opacity="0.62"/></svg>
<div class="lbl" style="left:369.99px;top:537px;letter-spacing:0.37px">u-boot.lds</div>
<svg style="left:503px;top:488px" width="38" height="47" viewBox="0 0 38 47"><path d="M1.5 1 H26 L36.5 10.5 V45 H1.5 Z" fill="#000" opacity="0.10" transform="translate(0,1)"/><path d="M1.5 0.5 H26 L36.5 10 V44.5 H1.5 Z" fill="url(#pg)" stroke="#a9a9a9" stroke-width="1"/><path d="M26 0.5 C27 4 27 7 25.6 9.6 C29 8.6 33 9 36.5 10 Z" fill="url(#cg)" stroke="#b4b4b4" stroke-width="0.6"/><path d="M6 8.5 H26.0" stroke="#8a8a8a" stroke-width="0.9" stroke-dasharray="2.6 0.5 3.4 0.5 1.8 0.5" opacity="0.62"/><path d="M6 10.5 H27.0" stroke="#8a8a8a" stroke-width="0.9" stroke-dasharray="3.6 0.5 2.2 0.5 2.8 0.5" opacity="0.62"/><path d="M6 12.5 H31.0" stroke="#8a8a8a" stroke-width="0.9" stroke-dasharray="3 0.5 4.2 0.5 2 0.5" opacity="0.62"/><path d="M6 14.5 H30.0" stroke="#8a8a8a" stroke-width="0.9" stroke-dasharray="2.6 0.5 3.4 0.5 1.8 0.5" opacity="0.62"/><path d="M6 16.5 H14.0" stroke="#8a8a8a" stroke-width="0.9" stroke-dasharray="3.6 0.5 2.2 0.5 2.8 0.5" opacity="0.62"/><path d="M6 20.5 H31.0" stroke="#8a8a8a" stroke-width="0.9" stroke-dasharray="3 0.5 4.2 0.5 2 0.5" opacity="0.62"/><path d="M6 22.5 H30.0" stroke="#8a8a8a" stroke-width="0.9" stroke-dasharray="2.6 0.5 3.4 0.5 1.8 0.5" opacity="0.62"/><path d="M6 24.5 H28.0" stroke="#8a8a8a" stroke-width="0.9" stroke-dasharray="3.6 0.5 2.2 0.5 2.8 0.5" opacity="0.62"/><path d="M6 26.5 H30.0" stroke="#8a8a8a" stroke-width="0.9" stroke-dasharray="3 0.5 4.2 0.5 2 0.5" opacity="0.62"/><path d="M6 28.5 H27.0" stroke="#8a8a8a" stroke-width="0.9" stroke-dasharray="2.6 0.5 3.4 0.5 1.8 0.5" opacity="0.62"/><path d="M6 32.5 H31.0" stroke="#8a8a8a" stroke-width="0.9" stroke-dasharray="3.6 0.5 2.2 0.5 2.8 0.5" opacity="0.62"/><path d="M6 34.5 H27.0" stroke="#8a8a8a" stroke-width="0.9" stroke-dasharray="3 0.5 4.2 0.5 2 0.5" opacity="0.62"/><path d="M6 36.5 H29.0" stroke="#8a8a8a" stroke-width="0.9" stroke-dasharray="2.6 0.5 3.4 0.5 1.8 0.5" opacity="0.62"/><path d="M6 38.5 H23.0" stroke="#8a8a8a" stroke-width="0.9" stroke-dasharray="3.6 0.5 2.2 0.5 2.8 0.5" opacity="0.62"/></svg>
<div class="lbl" style="left:462.99px;top:537px;letter-spacing:0.37px">u-boot.map</div>
<svg style="left:596px;top:488px" width="38" height="47" viewBox="0 0 38 47"><path d="M1.5 1 H26 L36.5 10.5 V45 H1.5 Z" fill="#000" opacity="0.10" transform="translate(0,1)"/><path d="M1.5 0.5 H26 L36.5 10 V44.5 H1.5 Z" fill="url(#pg)" stroke="#a9a9a9" stroke-width="1"/><path d="M26 0.5 C27 4 27 7 25.6 9.6 C29 8.6 33 9 36.5 10 Z" fill="url(#cg)" stroke="#b4b4b4" stroke-width="0.6"/><path d="M6 8.5 H26.0" stroke="#8a8a8a" stroke-width="0.9" stroke-dasharray="2.6 0.5 3.4 0.5 1.8 0.5" opacity="0.62"/><path d="M6 10.5 H27.0" stroke="#8a8a8a" stroke-width="0.9" stroke-dasharray="3.6 0.5 2.2 0.5 2.8 0.5" opacity="0.62"/><path d="M6 12.5 H31.0" stroke="#8a8a8a" stroke-width="0.9" stroke-dasharray="3 0.5 4.2 0.5 2 0.5" opacity="0.62"/><path d="M6 14.5 H30.0" stroke="#8a8a8a" stroke-width="0.9" stroke-dasharray="2.6 0.5 3.4 0.5 1.8 0.5" opacity="0.62"/><path d="M6 16.5 H14.0" stroke="#8a8a8a" stroke-width="0.9" stroke-dasharray="3.6 0.5 2.2 0.5 2.8 0.5" opacity="0.62"/><path d="M6 20.5 H31.0" stroke="#8a8a8a" stroke-width="0.9" stroke-dasharray="3 0.5 4.2 0.5 2 0.5" opacity="0.62"/><path d="M6 22.5 H30.0" stroke="#8a8a8a" stroke-width="0.9" stroke-dasharray="2.6 0.5 3.4 0.5 1.8 0.5" opacity="0.62"/><path d="M6 24.5 H28.0" stroke="#8a8a8a" stroke-width="0.9" stroke-dasharray="3.6 0.5 2.2 0.5 2.8 0.5" opacity="0.62"/><path d="M6 26.5 H30.0" stroke="#8a8a8a" stroke-width="0.9" stroke-dasharray="3 0.5 4.2 0.5 2 0.5" opacity="0.62"/><path d="M6 28.5 H27.0" stroke="#8a8a8a" stroke-width="0.9" stroke-dasharray="2.6 0.5 3.4 0.5 1.8 0.5" opacity="0.62"/><path d="M6 32.5 H31.0" stroke="#8a8a8a" stroke-width="0.9" stroke-dasharray="3.6 0.5 2.2 0.5 2.8 0.5" opacity="0.62"/><path d="M6 34.5 H27.0" stroke="#8a8a8a" stroke-width="0.9" stroke-dasharray="3 0.5 4.2 0.5 2 0.5" opacity="0.62"/><path d="M6 36.5 H29.0" stroke="#8a8a8a" stroke-width="0.9" stroke-dasharray="2.6 0.5 3.4 0.5 1.8 0.5" opacity="0.62"/><path d="M6 38.5 H23.0" stroke="#8a8a8a" stroke-width="0.9" stroke-dasharray="3.6 0.5 2.2 0.5 2.8 0.5" opacity="0.62"/></svg>
<div class="lbl" style="left:555.98px;top:537px;letter-spacing:0.37px">u-boot.srec</div>
<svg style="left:689px;top:488px" width="38" height="47" viewBox="0 0 38 47"><path d="M1.5 1 H26 L36.5 10.5 V45 H1.5 Z" fill="#000" opacity="0.10" transform="translate(0,1)"/><path d="M1.5 0.5 H26 L36.5 10 V44.5 H1.5 Z" fill="url(#pg)" stroke="#a9a9a9" stroke-width="1"/><path d="M26 0.5 C27 4 27 7 25.6 9.6 C29 8.6 33 9 36.5 10 Z" fill="url(#cg)" stroke="#b4b4b4" stroke-width="0.6"/><path d="M6 8.5 H26.0" stroke="#8a8a8a" stroke-width="0.9" stroke-dasharray="2.6 0.5 3.4 0.5 1.8 0.5" opacity="0.62"/><path d="M6 10.5 H27.0" stroke="#8a8a8a" stroke-width="0.9" stroke-dasharray="3.6 0.5 2.2 0.5 2.8 0.5" opacity="0.62"/><path d="M6 12.5 H31.0" stroke="#8a8a8a" stroke-width="0.9" stroke-dasharray="3 0.5 4.2 0.5 2 0.5" opacity="0.62"/><path d="M6 14.5 H30.0" stroke="#8a8a8a" stroke-width="0.9" stroke-dasharray="2.6 0.5 3.4 0.5 1.8 0.5" opacity="0.62"/><path d="M6 16.5 H14.0" stroke="#8a8a8a" stroke-width="0.9" stroke-dasharray="3.6 0.5 2.2 0.5 2.8 0.5" opacity="0.62"/><path d="M6 20.5 H31.0" stroke="#8a8a8a" stroke-width="0.9" stroke-dasharray="3 0.5 4.2 0.5 2 0.5" opacity="0.62"/><path d="M6 22.5 H30.0" stroke="#8a8a8a" stroke-width="0.9" stroke-dasharray="2.6 0.5 3.4 0.5 1.8 0.5" opacity="0.62"/><path d="M6 24.5 H28.0" stroke="#8a8a8a" stroke-width="0.9" stroke-dasharray="3.6 0.5 2.2 0.5 2.8 0.5" opacity="0.62"/><path d="M6 26.5 H30.0" stroke="#8a8a8a" stroke-width="0.9" stroke-dasharray="3 0.5 4.2 0.5 2 0.5" opacity="0.62"/><path d="M6 28.5 H27.0" stroke="#8a8a8a" stroke-width="0.9" stroke-dasharray="2.6 0.5 3.4 0.5 1.8 0.5" opacity="0.62"/><path d="M6 32.5 H31.0" stroke="#8a8a8a" stroke-width="0.9" stroke-dasharray="3.6 0.5 2.2 0.5 2.8 0.5" opacity="0.62"/><path d="M6 34.5 H27.0" stroke="#8a8a8a" stroke-width="0.9" stroke-dasharray="3 0.5 4.2 0.5 2 0.5" opacity="0.62"/><path d="M6 36.5 H29.0" stroke="#8a8a8a" stroke-width="0.9" stroke-dasharray="2.6 0.5 3.4 0.5 1.8 0.5" opacity="0.62"/><path d="M6 38.5 H23.0" stroke="#8a8a8a" stroke-width="0.9" stroke-dasharray="3.6 0.5 2.2 0.5 2.8 0.5" opacity="0.62"/></svg>
<div class="lbl" style="left:648.98px;top:537px;letter-spacing:0.37px">u-boot.sym</div>
<svg style="left:782px;top:488px" width="38" height="47" viewBox="0 0 38 47"><path d="M1.5 1 H26 L36.5 10.5 V45 H1.5 Z" fill="#000" opacity="0.10" transform="translate(0,1)"/><path d="M1.5 0.5 H26 L36.5 10 V44.5 H1.5 Z" fill="url(#pg)" stroke="#a9a9a9" stroke-width="1"/><path d="M26 0.5 C27 4 27 7 25.6 9.6 C29 8.6 33 9 36.5 10 Z" fill="url(#cg)" stroke="#b4b4b4" stroke-width="0.6"/><text x="6.2" y="11.4" font-family="Liberation Sans, sans-serif" font-weight="bold" font-size="7.2" fill="#6f6f6f">1</text><text x="6.2" y="20.5" font-family="Liberation Sans, sans-serif" font-weight="bold" font-size="7.2" fill="#6f6f6f">10</text><text x="6.2" y="29.6" font-family="Liberation Sans, sans-serif" font-weight="bold" font-size="7.2" fill="#6f6f6f">101</text><text x="6.2" y="38.7" font-family="Liberation Sans, sans-serif" font-weight="bold" font-size="7.2" fill="#6f6f6f">1010</text></svg>
<div class="lbl" style="left:741.98px;top:537px;letter-spacing:0.37px">u-boot-<br>nodtb.bin</div>
<div class="abs" id="vbstatus"></div><div class="abs" id="vbbot"></div>
<div class="abs" id="rctrl">Right Ctrl</div>
<svg width="0" height="0" style="left:0;top:0"><defs>
<linearGradient id="sb" x1="0" y1="0" x2="0.3" y2="1"><stop offset="0" stop-color="#2fa6ee"/><stop offset="1" stop-color="#0a78e8"/></linearGradient>
<linearGradient id="lb" x1="0" y1="0" x2="0.4" y2="1"><stop offset="0" stop-color="#b4e8fc"/><stop offset="1" stop-color="#52b4f4"/></linearGradient>
<linearGradient id="pw" x1="0" y1="0" x2="0" y2="1"><stop offset="0" stop-color="#a4b8fa"/><stop offset="1" stop-color="#6c86ea"/></linearGradient>
<linearGradient id="gy" x1="0" y1="0" x2="0" y2="1"><stop offset="0" stop-color="#e6e6e6"/><stop offset="1" stop-color="#cfcfcf"/></linearGradient>
<linearGradient id="gn" x1="0" y1="0" x2="0" y2="1"><stop offset="0" stop-color="#8ee05a"/><stop offset="1" stop-color="#3fae22"/></linearGradient>
</defs></svg>
<svg style="left:802px;top:759px" width="17" height="20" viewBox="0 0 17 21" preserveAspectRatio="none"><rect x="0.7" y="0.7" width="15.2" height="19.6" rx="1.6" fill="url(#lb)" stroke="#2f7fd8" stroke-width="1.2"/><circle cx="8.1" cy="9.8" r="6" fill="#fff"/><circle cx="8.1" cy="8.4" r="2" fill="#1a58c8"/><path d="M8.4 9.4 L10.4 11 L5 17.4 Q3 18 2.6 16 Z" fill="#1a58c8"/></svg>
<svg style="left:825px;top:759px" width="20" height="20" viewBox="0 0 20 21" preserveAspectRatio="none"><circle cx="10" cy="10.5" r="9.7" fill="url(#gy)" stroke="#c6c6c6" stroke-width="0.9"/><circle cx="10" cy="10.5" r="2.4" fill="#fdfdfd" stroke="#bdbdbd" stroke-width="1"/></svg>
<svg style="left:848px;top:759px" width="20" height="20" viewBox="0 0 20 21" preserveAspectRatio="none"><rect x="9" y="2.4" width="9.6" height="13" rx="3.2" fill="#d6d6d6" stroke="#b4b4b4" stroke-width="0.8"/><path d="M13.8 2.6 V7 M12 2.8 V6.4 M15.6 2.8 V6.4" stroke="#f4f4f4" stroke-width="0.9"/><path d="M14.4 8.6 H18 M14.4 10.6 H18 M14.4 12.6 H18" stroke="#a8a8a8" stroke-width="0.9"/><path d="M9 17.6 H19 V19.2 H9Z" fill="#c8c8c8"/><path d="M12.4 15.4 H15.6 V18 H12.4Z" fill="#c0c0c0"/><path d="M1.4 0.8 L8 6.2 H11.4 V13.8 H8 L1.4 19.8 Z" fill="url(#lb)" stroke="#2a7cd4" stroke-width="1.1"/><rect x="8" y="6.6" width="3" height="6.8" fill="#4aa8f0"/><rect x="0.2" y="7" width="1.5" height="6.6" rx="0.7" fill="#2a7cd4"/></svg>
<svg style="left:871px;top:759px" width="20" height="20" viewBox="0 0 20 21" preserveAspectRatio="none"><rect x="4.6" y="0.6" width="15.0" height="11.4" fill="#f2f2f2" stroke="#9c9c9c" stroke-width="0.8"/><rect x="5.8" y="1.8" width="12.6" height="9.0" fill="url(#sb)"/><path d="M14.6 12 H19.4 L18 14 H15.4 Z" fill="#e8e8e8" stroke="#a8a8a8" stroke-width="0.5"/><rect x="0.5" y="7.6" width="14.0" height="11.4" fill="#f2f2f2" stroke="#9c9c9c" stroke-width="0.8"/><rect x="1.7" y="8.8" width="11.6" height="9.0" fill="url(#sb)"/><path d="M2.4 19 H12.8 L12 20.8 H3.2 Z" fill="#f4f4f4" stroke="#a8a8a8" stroke-width="0.6"/></svg>
<svg style="left:894px;top:759px" width="20" height="20" viewBox="0 0 20 21" preserveAspectRatio="none"><g transform="rotate(42 10 11)"><rect x="6.4" y="-1.4" width="7.2" height="5.8" rx="0.6" fill="#fafafa" stroke="#9a9a9a" stroke-width="0.8"/><rect x="7.8" y="0.4" width="1.4" height="1.6" fill="#3a3a3a"/><rect x="10.8" y="0.4" width="1.4" height="1.6" fill="#3a3a3a"/><path d="M5.2 4.2 H14.8 V14 Q14.8 18.6 11.6 19.6 V22.6 H8.4 V19.6 Q5.2 18.6 5.2 14 Z" fill="url(#lb)" stroke="#2f8ee0" stroke-width="1"/></g></svg>
<svg style="left:917px;top:759px" width="20" height="20" viewBox="0 0 20 21" preserveAspectRatio="none"><path d="M0.8 3.8 L7.2 3.8 L9.6 1 H18 Q19.4 1 19.4 2.4 V20 H0.8 Z" fill="url(#gy)" stroke="#c4c4c4" stroke-width="0.9"/></svg>
<svg style="left:940px;top:759px" width="20" height="20" viewBox="0 0 20 21" preserveAspectRatio="none"><rect x="0.5" y="0.5" width="19.2" height="17.0" fill="#f2f2f2" stroke="#9c9c9c" stroke-width="0.8"/><rect x="1.7" y="1.7" width="16.8" height="14.6" fill="url(#sb)"/><path d="M3.4 17.5 H16.8 L15.4 20.4 H4.8 Z" fill="#fdfdfd" stroke="#a4a4a4" stroke-width="0.7"/></svg>
<svg style="left:963px;top:759px" width="20" height="20" viewBox="0 0 20 21" preserveAspectRatio="none"><rect x="0.5" y="5.8" width="16.0" height="14.6" fill="#f2f2f2" stroke="#9c9c9c" stroke-width="0.8"/><rect x="1.7" y="7.0" width="13.6" height="12.2" fill="url(#sb)"/><rect x="7.8" y="0.6" width="11.6" height="9.4" rx="1.2" fill="url(#pw)" stroke="#4f68d4" stroke-width="1"/><path d="M7.6 3.4 L4.4 2 V8.8 L7.6 7.4 Z" fill="#90a6f4" stroke="#4f68d4" stroke-width="0.8"/></svg>
<svg style="left:986px;top:759px" width="14" height="20" viewBox="0 0 14 21" preserveAspectRatio="none"><path d="M1 2 V19 M12.6 2 V19" stroke="#2a50b0" stroke-width="1.6" stroke-dasharray="1 1"/><rect x="1.6" y="0.8" width="10.4" height="19.4" rx="1.2" fill="#7c9cec" stroke="#2a50b0" stroke-width="1.1"/><text x="6.8" y="14.4" text-anchor="middle" font-family="Liberation Sans, sans-serif" font-weight="bold" font-size="10.5" fill="#fff">V</text></svg>
<svg style="left:1002px;top:759px" width="5" height="20" viewBox="0 0 5 21" preserveAspectRatio="none"><rect x="0.2" y="0.2" width="3.8" height="20.4" fill="#0a0a0a"/><rect x="1" y="13.4" width="2.2" height="6.4" fill="#38d838"/></svg>
<svg style="left:1009px;top:759px" width="21" height="20" viewBox="0 0 21 21" preserveAspectRatio="none"><ellipse cx="10.4" cy="10.6" rx="9.8" ry="9.2" fill="url(#lb)" stroke="#2a74cc" stroke-width="1.1" transform="rotate(-35 10.4 10.6)"/><path d="M4 3.4 L10 9.4" stroke="#d8eefc" stroke-width="1"/><circle cx="14.2" cy="5" r="1.5" fill="#143a8c"/><path d="M12.8 6.6 L18.6 11.8 L12.6 20 L9.4 20 L7.8 16.8 L12.4 12.6 L10 10 Z" fill="url(#gn)" stroke="#2f8f1c" stroke-width="0.9"/></svg>
<svg style="left:1032px;top:759px" width="20" height="20" viewBox="0 0 20 21" preserveAspectRatio="none"><rect x="0.8" y="0.8" width="18.4" height="19.6" rx="1.2" fill="url(#lb)" stroke="#2a80d6" stroke-width="1.2"/><path d="M7.8 4.6 H12.2 V9.6 H15.4 L10 15.2 L4.6 9.6 H7.8 Z" fill="url(#gn)" stroke="#2f8f1c" stroke-width="0.9"/></svg>
<svg style="left:1142px;top:768px" width="12" height="12" viewBox="0 0 12 12" shape-rendering="crispEdges"><rect x="8" y="0" width="3" height="3" fill="#c2c2c2"/><rect x="4" y="4" width="3" height="3" fill="#c2c2c2"/><rect x="8" y="4" width="3" height="3" fill="#c2c2c2"/><rect x="0" y="8" width="3" height="3" fill="#c2c2c2"/><rect x="4" y="8" width="3" height="3" fill="#c2c2c2"/><rect x="8" y="8" width="3" height="3" fill="#c2c2c2"/></svg>
</body></html>
